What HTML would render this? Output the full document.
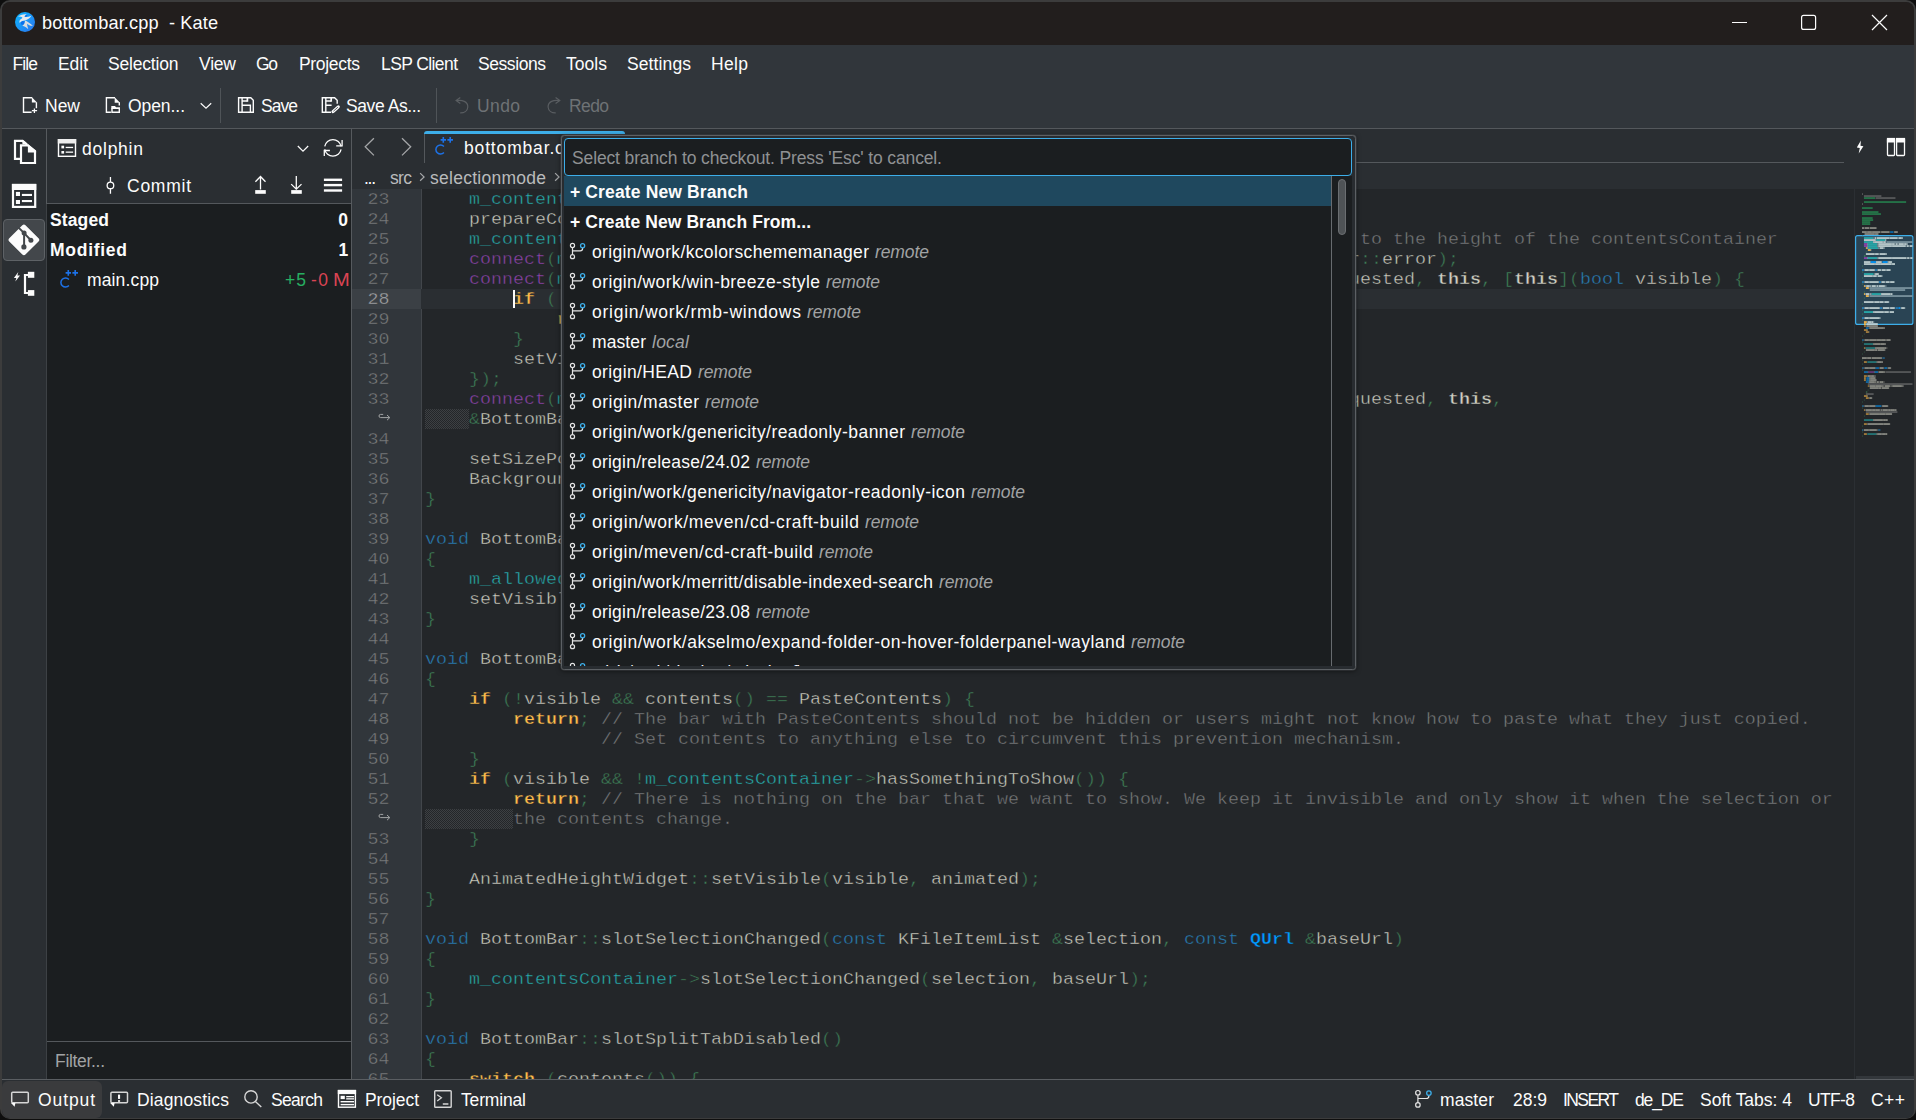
<!DOCTYPE html><html><head><meta charset="utf-8"><title>bottombar.cpp - Kate</title><style>
*{box-sizing:border-box;margin:0;padding:0}
html,body{width:1916px;height:1120px;overflow:hidden;background:#0e0e0e}
body{font-family:"Liberation Sans",sans-serif;position:relative}
.b{position:absolute;display:block}
.t{position:absolute;white-space:pre;display:block}
#win{position:absolute;left:0;top:0;width:1915.5px;height:1119px;border-radius:10px;background:#3c3c3c}
#in{position:absolute;left:2px;top:2px;width:1912px;height:1115.5px;border-radius:8px;overflow:hidden;background:#2a2e32}
#root{position:absolute;left:-2px;top:-2px;width:1916px;height:1120px}
.mono{font-family:"Liberation Mono",monospace}
.ln{position:absolute;left:352px;width:37.5px;text-align:right;font:18.33px/20px "Liberation Mono",monospace;color:#7a7c7d;height:20px;white-space:pre;transform:scaleY(.92);transform-origin:0 14px;margin-top:1px;-webkit-text-stroke:.4px #31363b}
.cl{position:absolute;left:425px;font:18.33px/20px "Liberation Mono",monospace;color:#cfcfc2;height:20px;white-space:pre;transform:scaleY(.92);transform-origin:0 14px;margin-top:1px}
#codein .cl{-webkit-text-stroke:.45px #232629}
.cl .s{color:#3f8058}.cl .v{color:#27aeae}.cl .f{color:#8e44ad}.cl .c{color:#fdbc4b;font-weight:700}
.cl .k{font-weight:700}.cl .d{color:#2980b9}.cl .m{color:#7a7c7d}.cl .q{color:#0099ff;font-weight:700}
#code{position:absolute;left:0;top:189px;width:1916px;height:890px;overflow:hidden}
#codein{position:absolute;left:0;top:-189px;width:1916px;height:1120px}
#pop{position:absolute;left:561px;top:135px;width:795px;height:535px;background:#282c30;border:1px solid #5c6064;border-radius:3.5px;overflow:hidden;box-shadow:0 0 0 .5px rgba(92,96,100,.55),0 1px 5px rgba(0,0,0,.55)}
#popin{position:absolute;left:-562px;top:-136px;width:1916px;height:1120px}
</style></head><body><div id="win"><div id="in"><div id="root"><div class="b" style="left:0px;top:0px;width:1916px;height:45px;background:#221e1d;"></div><span class="t " style="left:42px;top:11.00px;height:24px;line-height:24px;font-size:18.2px;color:#fcfcfc;letter-spacing:0.105px;">bottombar.cpp  - Kate</span><div class="b" style="left:0px;top:45px;width:1916px;height:84px;background:#31363b;"></div><span class="t " style="left:12.5px;top:51.50px;height:24px;line-height:24px;font-size:17.5px;color:#fcfcfc;letter-spacing:-0.901px;">File</span><span class="t " style="left:58px;top:51.50px;height:24px;line-height:24px;font-size:17.5px;color:#fcfcfc;letter-spacing:-0.052px;">Edit</span><span class="t " style="left:108px;top:51.50px;height:24px;line-height:24px;font-size:17.5px;color:#fcfcfc;letter-spacing:-0.188px;">Selection</span><span class="t " style="left:199px;top:51.50px;height:24px;line-height:24px;font-size:17.5px;color:#fcfcfc;letter-spacing:-0.208px;">View</span><span class="t " style="left:256px;top:51.50px;height:24px;line-height:24px;font-size:17.5px;color:#fcfcfc;letter-spacing:-1.359px;">Go</span><span class="t " style="left:299px;top:51.50px;height:24px;line-height:24px;font-size:17.5px;color:#fcfcfc;letter-spacing:-0.317px;">Projects</span><span class="t " style="left:381px;top:51.50px;height:24px;line-height:24px;font-size:17.5px;color:#fcfcfc;letter-spacing:-0.597px;">LSP Client</span><span class="t " style="left:478px;top:51.50px;height:24px;line-height:24px;font-size:17.5px;color:#fcfcfc;letter-spacing:-0.431px;">Sessions</span><span class="t " style="left:566px;top:51.50px;height:24px;line-height:24px;font-size:17.5px;color:#fcfcfc;letter-spacing:0.035px;">Tools</span><span class="t " style="left:627px;top:51.50px;height:24px;line-height:24px;font-size:17.5px;color:#fcfcfc;letter-spacing:0.109px;">Settings</span><span class="t " style="left:711px;top:51.50px;height:24px;line-height:24px;font-size:17.5px;color:#fcfcfc;letter-spacing:0.333px;">Help</span><span class="t " style="left:45px;top:93.50px;height:24px;line-height:24px;font-size:17.5px;color:#fcfcfc;letter-spacing:-0.008px;">New</span><span class="t " style="left:128px;top:93.50px;height:24px;line-height:24px;font-size:17.5px;color:#fcfcfc;letter-spacing:-0.068px;">Open...</span><div class="b" style="left:220px;top:88px;width:1px;height:35px;background:#4f5458;"></div><span class="t " style="left:261px;top:93.50px;height:24px;line-height:24px;font-size:17.5px;color:#fcfcfc;letter-spacing:-0.964px;">Save</span><span class="t " style="left:346px;top:93.50px;height:24px;line-height:24px;font-size:17.5px;color:#fcfcfc;letter-spacing:-0.422px;">Save As...</span><div class="b" style="left:436px;top:88px;width:1px;height:35px;background:#4f5458;"></div><span class="t " style="left:477px;top:93.50px;height:24px;line-height:24px;font-size:17.5px;color:#6e7275;letter-spacing:0.385px;">Undo</span><span class="t " style="left:569px;top:93.50px;height:24px;line-height:24px;font-size:17.5px;color:#6e7275;letter-spacing:-0.615px;">Redo</span><div class="b" style="left:0px;top:128px;width:1916px;height:1px;background:#54585c;"></div><div class="b" style="left:0px;top:129px;width:46px;height:951px;background:#2a2e32;"></div><div class="b" style="left:46px;top:129px;width:1px;height:75px;background:#565a5e;"></div><div class="b" style="left:46px;top:204px;width:1px;height:876px;background:#3d4145;"></div><div class="b" style="left:3px;top:219px;width:42px;height:42px;background:#43474b;border-radius:4px;border:1px solid #5e6266"></div><div class="b" style="left:47px;top:129px;width:304px;height:75px;background:#2a2e32;"></div><span class="t " style="left:82px;top:137.00px;height:24px;line-height:24px;font-size:17.5px;color:#fcfcfc;letter-spacing:0.758px;">dolphin</span><span class="t " style="left:127px;top:174.00px;height:24px;line-height:24px;font-size:17.5px;color:#fcfcfc;letter-spacing:0.744px;">Commit</span><div class="b" style="left:47px;top:203px;width:304px;height:1px;background:#54585c;"></div><div class="b" style="left:47px;top:204px;width:304px;height:837px;background:#1b1e20;"></div><span class="t " style="left:50px;top:208.00px;height:24px;line-height:24px;font-size:17.5px;color:#fcfcfc;font-weight:700;letter-spacing:0.128px;">Staged</span><span class="t " style="left:338.3px;top:208.00px;height:24px;line-height:24px;font-size:17.5px;color:#fcfcfc;font-weight:700;">0</span><span class="t " style="left:50px;top:238.00px;height:24px;line-height:24px;font-size:17.5px;color:#fcfcfc;font-weight:700;letter-spacing:0.723px;">Modified</span><span class="t " style="left:338.4px;top:238.00px;height:24px;line-height:24px;font-size:17.5px;color:#fcfcfc;font-weight:700;">1</span><span class="t " style="left:87px;top:268.20px;height:24px;line-height:24px;font-size:17.5px;color:#fcfcfc;letter-spacing:0.141px;">main.cpp</span><span class="t " style="left:285px;top:268.20px;height:24px;line-height:24px;font-size:17.5px;color:#27ae60;letter-spacing:1.047px;">+5</span><span class="t " style="left:311px;top:268.20px;height:24px;line-height:24px;font-size:17.5px;color:#da4453;letter-spacing:1.438px;">-0</span><span class="t " style="left:333px;top:268.20px;height:24px;line-height:24px;font-size:17.5px;color:#da4453;transform:scaleX(1.15);transform-origin:0 0;">M</span><div class="b" style="left:47px;top:1041px;width:304px;height:1px;background:#54585c;"></div><div class="b" style="left:47px;top:1042px;width:304px;height:37px;background:#1b1e20;"></div><span class="t " style="left:55px;top:1049.00px;height:24px;line-height:24px;font-size:17.5px;color:#a1a3a4;letter-spacing:-0.314px;">Filter...</span><div class="b" style="left:351px;top:129px;width:1px;height:951px;background:#565a5e;"></div><div class="b" style="left:352px;top:129px;width:1564px;height:37px;background:#2a2e32;"></div><div class="b" style="left:626px;top:162px;width:1218px;height:1px;background:#54585c;"></div><div class="b" style="left:424px;top:131px;width:201px;height:3px;background:#3daee9;border-radius:3px 3px 0 0"></div><div class="b" style="left:424px;top:134px;width:1px;height:29px;background:#54585c;"></div><span class="t " style="left:464px;top:136.00px;height:24px;line-height:24px;font-size:17.5px;color:#fcfcfc;letter-spacing:0.841px;">bottombar.cpp</span><div class="b" style="left:352px;top:166px;width:1564px;height:23px;background:#2a2e32;"></div><span class="t " style="left:364px;top:166.00px;height:24px;line-height:24px;font-size:17.5px;color:#fcfcfc;letter-spacing:-1.297px;">...</span><span class="t " style="left:390px;top:166.00px;height:24px;line-height:24px;font-size:17.5px;color:#b9bbbc;letter-spacing:-0.664px;">src</span><span class="t " style="left:430px;top:166.00px;height:24px;line-height:24px;font-size:17.5px;color:#b9bbbc;letter-spacing:0.262px;">selectionmode</span><span class="t " style="left:582px;top:166.00px;height:24px;line-height:24px;font-size:17.5px;color:#b9bbbc;letter-spacing:0.591px;">bottombar.cpp</span><div id="code"><div id="codein"><div class="b" style="left:352px;top:189px;width:69px;height:891px;background:#31363b;"></div><div class="b" style="left:422px;top:189px;width:1433px;height:891px;background:#232629;"></div><div class="b" style="left:421px;top:189px;width:1px;height:891px;background:#42464b;"></div><div class="b" style="left:1855px;top:189px;width:61px;height:891px;background:#232629;"></div><div class="b" style="left:352px;top:289px;width:69px;height:20px;background:#3b4045;"></div><div class="b" style="left:421px;top:289px;width:1434px;height:20px;background:#2a2e32;"></div><div class="ln" style="top:189px;color:#7a7c7d">23</div><div class="cl" style="top:189px">    <span class="v">m_contentsContainer</span> <span class="s">=</span> <span class="k">new</span> <span class="n">BottomBarContentsContainer</span><span class="s">(</span><span class="n">actionCollection</span><span class="s">,</span> <span class="k">nullptr</span><span class="s">);</span></div><div class="ln" style="top:209px;color:#7a7c7d">24</div><div class="cl" style="top:209px">    <span class="n">prepareContentsContainer</span><span class="s">(</span><span class="v">m_contentsContainer</span><span class="s">);</span></div><div class="ln" style="top:229px;color:#7a7c7d">25</div><div class="cl" style="top:229px">    <span class="v">m_contentsContainer</span><span class="s">-&gt;</span><span class="n">installEventFilter</span><span class="s">(</span><span class="k">this</span><span class="s">);</span> <span class="m">// Adjusts the height of this bar to the height of the contentsContainer</span></div><div class="ln" style="top:249px;color:#7a7c7d">26</div><div class="cl" style="top:249px">    <span class="f">connect</span><span class="s">(</span><span class="v">m_contentsContainer</span><span class="s">,</span> <span class="s">&amp;</span><span class="n">BottomBarContentsContainer</span><span class="s">::</span><span class="n">error</span><span class="s">,</span> <span class="k">this</span><span class="s">,</span> <span class="s">&amp;</span><span class="n">BottomBar</span><span class="s">::</span><span class="n">error</span><span class="s">);</span></div><div class="ln" style="top:269px;color:#7a7c7d">27</div><div class="cl" style="top:269px">    <span class="f">connect</span><span class="s">(</span><span class="v">m_contentsContainer</span><span class="s">,</span> <span class="s">&amp;</span><span class="n">BottomBarContentsContainer</span><span class="s">::</span><span class="n">barVisibilityChangeRequested</span><span class="s">,</span> <span class="k">this</span><span class="s">,</span> <span class="s">[</span><span class="k">this</span><span class="s">](</span><span class="d">bool</span> <span class="n">visible</span><span class="s">)</span> <span class="s">{</span></div><div class="ln" style="top:289px;color:#a5a6a8;-webkit-text-stroke-color:#3b4045">28</div><div class="cl" style="top:289px;-webkit-text-stroke-color:#2a2e32">        <span class="c">if</span> <span class="s">(!</span><span class="v">m_allowedToBeVisible</span> <span class="s">&amp;&amp;</span> <span class="n">visible</span><span class="s">)</span> <span class="s">{</span></div><div class="ln" style="top:309px;color:#7a7c7d">29</div><div class="cl" style="top:309px">            <span class="c">return</span><span class="s">;</span></div><div class="ln" style="top:329px;color:#7a7c7d">30</div><div class="cl" style="top:329px">        <span class="s">}</span></div><div class="ln" style="top:349px;color:#7a7c7d">31</div><div class="cl" style="top:349px">        <span class="n">setVisibleInternal</span><span class="s">(</span><span class="n">visible</span><span class="s">,</span> <span class="n">WithAnimation</span><span class="s">);</span></div><div class="ln" style="top:369px;color:#7a7c7d">32</div><div class="cl" style="top:369px">    <span class="s">});</span></div><div class="ln" style="top:389px;color:#7a7c7d">33</div><div class="cl" style="top:389px">    <span class="f">connect</span><span class="s">(</span><span class="v">m_contentsContainer</span><span class="s">,</span> <span class="s">&amp;</span><span class="n">BottomBarContentsContainer</span><span class="s">::</span><span class="n">selectionModeLeavingRequested</span><span class="s">,</span> <span class="k">this</span><span class="s">,</span></div><svg class="b" style="left:376px;top:409px;" width="16" height="20" viewBox="0 0 16 20"><path d="M7.2 5.4H4.6A1.6 1.6 0 0 0 4.6 8.6H13.4M11 6L13.8 8.6L11 11.2" fill="none" stroke="#a3a5a6" stroke-width="1"/></svg><div class="b" style="left:425px;top:409px;width:44px;height:20px;background:#232629;background-image:repeating-conic-gradient(#3d4043 0% 25%,#232629 0% 50%);background-size:2px 2px"></div><div class="cl" style="top:409px">    <span class="s">&amp;</span><span class="n">BottomBar</span><span class="s">::</span><span class="n">selectionModeLeavingRequested</span><span class="s">);</span></div><div class="ln" style="top:429px;color:#7a7c7d">34</div><div class="ln" style="top:449px;color:#7a7c7d">35</div><div class="cl" style="top:449px">    <span class="n">setSizePolicy</span><span class="s">(</span><span class="q">QSizePolicy</span><span class="s">::</span><span class="n">Expanding</span><span class="s">,</span> <span class="q">QSizePolicy</span><span class="s">::</span><span class="n">Fixed</span><span class="s">);</span></div><div class="ln" style="top:469px;color:#7a7c7d">36</div><div class="cl" style="top:469px">    <span class="n">BackgroundColorHelper</span><span class="s">::</span><span class="n">instance</span><span class="s">()-&gt;</span><span class="n">controlBackgroundColor</span><span class="s">(</span><span class="k">this</span><span class="s">);</span></div><div class="ln" style="top:489px;color:#7a7c7d">37</div><div class="cl" style="top:489px"><span class="s">}</span></div><div class="ln" style="top:509px;color:#7a7c7d">38</div><div class="ln" style="top:529px;color:#7a7c7d">39</div><div class="cl" style="top:529px"><span class="d">void</span> <span class="n">BottomBar</span><span class="s">::</span><span class="n">setVisible</span><span class="s">(</span><span class="d">bool</span> <span class="n">visible</span><span class="s">,</span> <span class="n">Animated animated</span><span class="s">)</span></div><div class="ln" style="top:549px;color:#7a7c7d">40</div><div class="cl" style="top:549px"><span class="s">{</span></div><div class="ln" style="top:569px;color:#7a7c7d">41</div><div class="cl" style="top:569px">    <span class="v">m_allowedToBeVisible</span> <span class="s">=</span> <span class="n">visible</span><span class="s">;</span></div><div class="ln" style="top:589px;color:#7a7c7d">42</div><div class="cl" style="top:589px">    <span class="n">setVisibleInternal</span><span class="s">(</span><span class="n">visible</span><span class="s">,</span> <span class="n">animated</span><span class="s">);</span></div><div class="ln" style="top:609px;color:#7a7c7d">43</div><div class="cl" style="top:609px"><span class="s">}</span></div><div class="ln" style="top:629px;color:#7a7c7d">44</div><div class="ln" style="top:649px;color:#7a7c7d">45</div><div class="cl" style="top:649px"><span class="d">void</span> <span class="n">BottomBar</span><span class="s">::</span><span class="n">setVisibleInternal</span><span class="s">(</span><span class="d">bool</span> <span class="n">visible</span><span class="s">,</span> <span class="n">Animated animated</span><span class="s">)</span></div><div class="ln" style="top:669px;color:#7a7c7d">46</div><div class="cl" style="top:669px"><span class="s">{</span></div><div class="ln" style="top:689px;color:#7a7c7d">47</div><div class="cl" style="top:689px">    <span class="c">if</span> <span class="s">(!</span><span class="n">visible</span> <span class="s">&amp;&amp;</span> <span class="n">contents</span><span class="s">()</span> <span class="s">==</span> <span class="n">PasteContents</span><span class="s">)</span> <span class="s">{</span></div><div class="ln" style="top:709px;color:#7a7c7d">48</div><div class="cl" style="top:709px">        <span class="c">return</span><span class="s">;</span> <span class="m">// The bar with PasteContents should not be hidden or users might not know how to paste what they just copied.</span></div><div class="ln" style="top:729px;color:#7a7c7d">49</div><div class="cl" style="top:729px">                <span class="m">// Set contents to anything else to circumvent this prevention mechanism.</span></div><div class="ln" style="top:749px;color:#7a7c7d">50</div><div class="cl" style="top:749px">    <span class="s">}</span></div><div class="ln" style="top:769px;color:#7a7c7d">51</div><div class="cl" style="top:769px">    <span class="c">if</span> <span class="s">(</span><span class="n">visible</span> <span class="s">&amp;&amp;</span> <span class="s">!</span><span class="v">m_contentsContainer</span><span class="s">-&gt;</span><span class="n">hasSomethingToShow</span><span class="s">())</span> <span class="s">{</span></div><div class="ln" style="top:789px;color:#7a7c7d">52</div><div class="cl" style="top:789px">        <span class="c">return</span><span class="s">;</span> <span class="m">// There is nothing on the bar that we want to show. We keep it invisible and only show it when the selection or</span></div><svg class="b" style="left:376px;top:809px;" width="16" height="20" viewBox="0 0 16 20"><path d="M7.2 5.4H4.6A1.6 1.6 0 0 0 4.6 8.6H13.4M11 6L13.8 8.6L11 11.2" fill="none" stroke="#a3a5a6" stroke-width="1"/></svg><div class="b" style="left:425px;top:809px;width:88px;height:20px;background:#232629;background-image:repeating-conic-gradient(#3d4043 0% 25%,#232629 0% 50%);background-size:2px 2px"></div><div class="cl" style="top:809px">        <span class="m">the contents change.</span></div><div class="ln" style="top:829px;color:#7a7c7d">53</div><div class="cl" style="top:829px">    <span class="s">}</span></div><div class="ln" style="top:849px;color:#7a7c7d">54</div><div class="ln" style="top:869px;color:#7a7c7d">55</div><div class="cl" style="top:869px">    <span class="n">AnimatedHeightWidget</span><span class="s">::</span><span class="n">setVisible</span><span class="s">(</span><span class="n">visible</span><span class="s">,</span> <span class="n">animated</span><span class="s">);</span></div><div class="ln" style="top:889px;color:#7a7c7d">56</div><div class="cl" style="top:889px"><span class="s">}</span></div><div class="ln" style="top:909px;color:#7a7c7d">57</div><div class="ln" style="top:929px;color:#7a7c7d">58</div><div class="cl" style="top:929px"><span class="d">void</span> <span class="n">BottomBar</span><span class="s">::</span><span class="n">slotSelectionChanged</span><span class="s">(</span><span class="d">const</span> <span class="n">KFileItemList</span> <span class="s">&amp;</span><span class="n">selection</span><span class="s">,</span> <span class="d">const</span> <span class="q">QUrl</span> <span class="s">&amp;</span><span class="n">baseUrl</span><span class="s">)</span></div><div class="ln" style="top:949px;color:#7a7c7d">59</div><div class="cl" style="top:949px"><span class="s">{</span></div><div class="ln" style="top:969px;color:#7a7c7d">60</div><div class="cl" style="top:969px">    <span class="v">m_contentsContainer</span><span class="s">-&gt;</span><span class="n">slotSelectionChanged</span><span class="s">(</span><span class="n">selection</span><span class="s">,</span> <span class="n">baseUrl</span><span class="s">);</span></div><div class="ln" style="top:989px;color:#7a7c7d">61</div><div class="cl" style="top:989px"><span class="s">}</span></div><div class="ln" style="top:1009px;color:#7a7c7d">62</div><div class="ln" style="top:1029px;color:#7a7c7d">63</div><div class="cl" style="top:1029px"><span class="d">void</span> <span class="n">BottomBar</span><span class="s">::</span><span class="n">slotSplitTabDisabled</span><span class="s">()</span></div><div class="ln" style="top:1049px;color:#7a7c7d">64</div><div class="cl" style="top:1049px"><span class="s">{</span></div><div class="ln" style="top:1069px;color:#7a7c7d">65</div><div class="cl" style="top:1069px">    <span class="c">switch</span> <span class="s">(</span><span class="n">contents</span><span class="s">())</span> <span class="s">{</span></div><svg class="b" style="left:1855px;top:189px" width="59" height="300" viewBox="1855 189 59 300"><rect x="1855.6" y="235.6" width="57.3" height="88.8" rx="2" fill="#2a4454" stroke="#3daee9" stroke-width="1.2"/><rect x="1862.00" y="193.2" width="0.97" height="1.7" fill="#7a7c7d" opacity="0.62"/><rect x="1863.94" y="195.2" width="17.46" height="1.7" fill="#7a7c7d" opacity="0.62"/><rect x="1863.94" y="197.2" width="11.15" height="1.7" fill="#27ae60" opacity="0.62"/><rect x="1875.58" y="197.2" width="19.88" height="1.7" fill="#7a7c7d" opacity="0.62"/><rect x="1863.94" y="201.2" width="42.20" height="1.7" fill="#27ae60" opacity="0.62"/><rect x="1862.00" y="203.2" width="0.97" height="1.7" fill="#7a7c7d" opacity="0.62"/><rect x="1862.00" y="207.2" width="10.67" height="1.7" fill="#27ae60" opacity="0.62"/><rect x="1862.00" y="211.2" width="16.49" height="1.7" fill="#27ae60" opacity="0.62"/><rect x="1862.00" y="213.2" width="18.91" height="1.7" fill="#27ae60" opacity="0.62"/><rect x="1862.00" y="217.2" width="10.67" height="1.7" fill="#27ae60" opacity="0.62"/><rect x="1862.00" y="219.2" width="11.15" height="1.7" fill="#27ae60" opacity="0.62"/><rect x="1862.00" y="221.2" width="8.24" height="1.7" fill="#27ae60" opacity="0.62"/><rect x="1862.00" y="223.2" width="8.24" height="1.7" fill="#27ae60" opacity="0.62"/><rect x="1862.00" y="227.2" width="2.42" height="1.7" fill="#cfcfc2" opacity="0.62"/><rect x="1864.91" y="227.2" width="4.37" height="1.7" fill="#cfcfc2" opacity="0.62"/><rect x="1869.76" y="227.2" width="6.30" height="1.7" fill="#cfcfc2" opacity="0.62"/><rect x="1876.07" y="227.2" width="0.48" height="1.7" fill="#cfcfc2" opacity="0.62"/><rect x="1862.00" y="231.2" width="4.37" height="1.7" fill="#cfcfc2" opacity="0.62"/><rect x="1866.37" y="231.2" width="0.97" height="1.7" fill="#cfcfc2" opacity="0.62"/><rect x="1867.34" y="231.2" width="4.37" height="1.7" fill="#cfcfc2" opacity="0.62"/><rect x="1871.70" y="231.2" width="0.48" height="1.7" fill="#cfcfc2" opacity="0.62"/><rect x="1872.18" y="231.2" width="8.24" height="1.7" fill="#cfcfc2" opacity="0.62"/><rect x="1880.91" y="231.2" width="0.48" height="1.7" fill="#cfcfc2" opacity="0.62"/><rect x="1881.40" y="231.2" width="7.76" height="1.7" fill="#cfcfc2" opacity="0.62"/><rect x="1889.16" y="231.2" width="0.48" height="1.7" fill="#cfcfc2" opacity="0.62"/><rect x="1890.13" y="231.2" width="3.40" height="1.7" fill="#0099ff" opacity="0.62"/><rect x="1894.01" y="231.2" width="0.48" height="1.7" fill="#cfcfc2" opacity="0.62"/><rect x="1894.49" y="231.2" width="2.91" height="1.7" fill="#cfcfc2" opacity="0.62"/><rect x="1897.40" y="231.2" width="0.48" height="1.7" fill="#cfcfc2" opacity="0.62"/><rect x="1863.94" y="233.2" width="0.48" height="1.7" fill="#cfcfc2" opacity="0.62"/><rect x="1864.91" y="233.2" width="9.70" height="1.7" fill="#cfcfc2" opacity="0.62"/><rect x="1874.61" y="233.2" width="0.48" height="1.7" fill="#cfcfc2" opacity="0.62"/><rect x="1875.10" y="233.2" width="2.91" height="1.7" fill="#cfcfc2" opacity="0.62"/><rect x="1878.01" y="233.2" width="0.48" height="1.7" fill="#cfcfc2" opacity="0.62"/><rect x="1862.00" y="235.2" width="0.48" height="1.7" fill="#3f8058"/><rect x="1863.94" y="237.2" width="9.21" height="1.7" fill="#27aeae"/><rect x="1873.64" y="237.2" width="0.48" height="1.7" fill="#c3d3d4"/><rect x="1874.61" y="237.2" width="1.46" height="1.7" fill="#c3d3d4"/><rect x="1876.55" y="237.2" width="12.61" height="1.7" fill="#c3d3d4"/><rect x="1889.16" y="237.2" width="0.48" height="1.7" fill="#c3d3d4"/><rect x="1889.64" y="237.2" width="7.76" height="1.7" fill="#c3d3d4"/><rect x="1897.40" y="237.2" width="0.48" height="1.7" fill="#c3d3d4"/><rect x="1898.38" y="237.2" width="3.40" height="1.7" fill="#c3d3d4"/><rect x="1901.77" y="237.2" width="0.97" height="1.7" fill="#c3d3d4"/><rect x="1863.94" y="239.2" width="11.64" height="1.7" fill="#c3d3d4"/><rect x="1875.58" y="239.2" width="0.48" height="1.7" fill="#c3d3d4"/><rect x="1876.07" y="239.2" width="9.21" height="1.7" fill="#27aeae"/><rect x="1885.28" y="239.2" width="0.97" height="1.7" fill="#c3d3d4"/><rect x="1863.94" y="241.2" width="9.21" height="1.7" fill="#27aeae"/><rect x="1873.15" y="241.2" width="0.97" height="1.7" fill="#c3d3d4"/><rect x="1874.12" y="241.2" width="8.73" height="1.7" fill="#c3d3d4"/><rect x="1882.86" y="241.2" width="0.48" height="1.7" fill="#c3d3d4"/><rect x="1883.34" y="241.2" width="1.94" height="1.7" fill="#c3d3d4"/><rect x="1885.28" y="241.2" width="0.97" height="1.7" fill="#c3d3d4"/><rect x="1886.73" y="241.2" width="25.77" height="1.7" fill="#7d96a1"/><rect x="1863.94" y="243.2" width="3.40" height="1.7" fill="#8e44ad"/><rect x="1867.34" y="243.2" width="0.48" height="1.7" fill="#c3d3d4"/><rect x="1867.82" y="243.2" width="9.21" height="1.7" fill="#27aeae"/><rect x="1877.04" y="243.2" width="0.48" height="1.7" fill="#c3d3d4"/><rect x="1878.01" y="243.2" width="0.48" height="1.7" fill="#c3d3d4"/><rect x="1878.49" y="243.2" width="12.61" height="1.7" fill="#c3d3d4"/><rect x="1891.10" y="243.2" width="0.97" height="1.7" fill="#c3d3d4"/><rect x="1892.07" y="243.2" width="2.42" height="1.7" fill="#c3d3d4"/><rect x="1894.49" y="243.2" width="0.48" height="1.7" fill="#c3d3d4"/><rect x="1895.46" y="243.2" width="1.94" height="1.7" fill="#c3d3d4"/><rect x="1897.40" y="243.2" width="0.48" height="1.7" fill="#c3d3d4"/><rect x="1898.38" y="243.2" width="0.48" height="1.7" fill="#c3d3d4"/><rect x="1898.86" y="243.2" width="4.37" height="1.7" fill="#c3d3d4"/><rect x="1903.22" y="243.2" width="0.97" height="1.7" fill="#c3d3d4"/><rect x="1904.19" y="243.2" width="2.42" height="1.7" fill="#c3d3d4"/><rect x="1906.62" y="243.2" width="0.97" height="1.7" fill="#c3d3d4"/><rect x="1863.94" y="245.2" width="3.40" height="1.7" fill="#8e44ad"/><rect x="1867.34" y="245.2" width="0.48" height="1.7" fill="#c3d3d4"/><rect x="1867.82" y="245.2" width="9.21" height="1.7" fill="#27aeae"/><rect x="1877.04" y="245.2" width="0.48" height="1.7" fill="#c3d3d4"/><rect x="1878.01" y="245.2" width="0.48" height="1.7" fill="#c3d3d4"/><rect x="1878.49" y="245.2" width="12.61" height="1.7" fill="#c3d3d4"/><rect x="1891.10" y="245.2" width="0.97" height="1.7" fill="#c3d3d4"/><rect x="1892.07" y="245.2" width="13.58" height="1.7" fill="#c3d3d4"/><rect x="1905.65" y="245.2" width="0.48" height="1.7" fill="#c3d3d4"/><rect x="1906.62" y="245.2" width="1.94" height="1.7" fill="#c3d3d4"/><rect x="1908.56" y="245.2" width="0.48" height="1.7" fill="#c3d3d4"/><rect x="1909.53" y="245.2" width="0.48" height="1.7" fill="#c3d3d4"/><rect x="1910.02" y="245.2" width="1.94" height="1.7" fill="#c3d3d4"/><rect x="1911.95" y="245.2" width="0.55" height="1.7" fill="#c3d3d4"/><rect x="1865.88" y="247.2" width="0.97" height="1.7" fill="#fdbc4b"/><rect x="1867.34" y="247.2" width="0.97" height="1.7" fill="#c3d3d4"/><rect x="1868.31" y="247.2" width="9.70" height="1.7" fill="#27aeae"/><rect x="1878.49" y="247.2" width="0.97" height="1.7" fill="#c3d3d4"/><rect x="1879.94" y="247.2" width="3.40" height="1.7" fill="#c3d3d4"/><rect x="1883.34" y="247.2" width="0.48" height="1.7" fill="#c3d3d4"/><rect x="1884.31" y="247.2" width="0.48" height="1.7" fill="#c3d3d4"/><rect x="1867.82" y="249.2" width="2.91" height="1.7" fill="#fdbc4b"/><rect x="1870.73" y="249.2" width="0.48" height="1.7" fill="#c3d3d4"/><rect x="1865.88" y="251.2" width="0.48" height="1.7" fill="#3f8058"/><rect x="1865.88" y="253.2" width="8.73" height="1.7" fill="#c3d3d4"/><rect x="1874.61" y="253.2" width="0.48" height="1.7" fill="#c3d3d4"/><rect x="1875.10" y="253.2" width="3.40" height="1.7" fill="#c3d3d4"/><rect x="1878.49" y="253.2" width="0.48" height="1.7" fill="#c3d3d4"/><rect x="1879.46" y="253.2" width="6.30" height="1.7" fill="#c3d3d4"/><rect x="1885.77" y="253.2" width="0.97" height="1.7" fill="#c3d3d4"/><rect x="1863.94" y="255.2" width="1.46" height="1.7" fill="#3f8058"/><rect x="1863.94" y="257.2" width="3.40" height="1.7" fill="#8e44ad"/><rect x="1867.34" y="257.2" width="0.48" height="1.7" fill="#c3d3d4"/><rect x="1867.82" y="257.2" width="9.21" height="1.7" fill="#27aeae"/><rect x="1877.04" y="257.2" width="0.48" height="1.7" fill="#c3d3d4"/><rect x="1878.01" y="257.2" width="0.48" height="1.7" fill="#c3d3d4"/><rect x="1878.49" y="257.2" width="12.61" height="1.7" fill="#c3d3d4"/><rect x="1891.10" y="257.2" width="0.97" height="1.7" fill="#c3d3d4"/><rect x="1892.07" y="257.2" width="14.06" height="1.7" fill="#c3d3d4"/><rect x="1906.13" y="257.2" width="0.48" height="1.7" fill="#c3d3d4"/><rect x="1907.11" y="257.2" width="1.94" height="1.7" fill="#c3d3d4"/><rect x="1909.05" y="257.2" width="0.48" height="1.7" fill="#c3d3d4"/><rect x="1910.02" y="257.2" width="0.48" height="1.7" fill="#c3d3d4"/><rect x="1910.50" y="257.2" width="2.00" height="1.7" fill="#c3d3d4"/><rect x="1863.94" y="261.2" width="6.30" height="1.7" fill="#c3d3d4"/><rect x="1870.24" y="261.2" width="0.48" height="1.7" fill="#c3d3d4"/><rect x="1870.73" y="261.2" width="5.33" height="1.7" fill="#0099ff"/><rect x="1876.07" y="261.2" width="0.97" height="1.7" fill="#c3d3d4"/><rect x="1877.04" y="261.2" width="4.37" height="1.7" fill="#c3d3d4"/><rect x="1881.40" y="261.2" width="0.48" height="1.7" fill="#c3d3d4"/><rect x="1882.37" y="261.2" width="5.33" height="1.7" fill="#0099ff"/><rect x="1887.70" y="261.2" width="0.97" height="1.7" fill="#c3d3d4"/><rect x="1888.67" y="261.2" width="2.42" height="1.7" fill="#c3d3d4"/><rect x="1891.10" y="261.2" width="0.97" height="1.7" fill="#c3d3d4"/><rect x="1863.94" y="263.2" width="10.19" height="1.7" fill="#c3d3d4"/><rect x="1874.12" y="263.2" width="0.97" height="1.7" fill="#c3d3d4"/><rect x="1875.10" y="263.2" width="3.88" height="1.7" fill="#c3d3d4"/><rect x="1878.97" y="263.2" width="1.94" height="1.7" fill="#c3d3d4"/><rect x="1880.91" y="263.2" width="10.67" height="1.7" fill="#c3d3d4"/><rect x="1891.59" y="263.2" width="0.48" height="1.7" fill="#c3d3d4"/><rect x="1892.07" y="263.2" width="1.94" height="1.7" fill="#c3d3d4"/><rect x="1894.01" y="263.2" width="0.97" height="1.7" fill="#c3d3d4"/><rect x="1862.00" y="265.2" width="0.48" height="1.7" fill="#3f8058"/><rect x="1862.00" y="269.2" width="1.94" height="1.7" fill="#2980b9"/><rect x="1864.42" y="269.2" width="4.37" height="1.7" fill="#c3d3d4"/><rect x="1868.79" y="269.2" width="0.97" height="1.7" fill="#c3d3d4"/><rect x="1869.76" y="269.2" width="4.85" height="1.7" fill="#c3d3d4"/><rect x="1874.61" y="269.2" width="0.48" height="1.7" fill="#c3d3d4"/><rect x="1875.10" y="269.2" width="1.94" height="1.7" fill="#2980b9"/><rect x="1877.52" y="269.2" width="3.40" height="1.7" fill="#c3d3d4"/><rect x="1880.91" y="269.2" width="0.48" height="1.7" fill="#c3d3d4"/><rect x="1881.88" y="269.2" width="3.88" height="1.7" fill="#c3d3d4"/><rect x="1886.25" y="269.2" width="3.88" height="1.7" fill="#c3d3d4"/><rect x="1890.13" y="269.2" width="0.48" height="1.7" fill="#c3d3d4"/><rect x="1862.00" y="271.2" width="0.48" height="1.7" fill="#3f8058"/><rect x="1863.94" y="273.2" width="9.70" height="1.7" fill="#27aeae"/><rect x="1874.12" y="273.2" width="0.48" height="1.7" fill="#c3d3d4"/><rect x="1875.10" y="273.2" width="3.40" height="1.7" fill="#c3d3d4"/><rect x="1878.49" y="273.2" width="0.48" height="1.7" fill="#c3d3d4"/><rect x="1863.94" y="275.2" width="8.73" height="1.7" fill="#c3d3d4"/><rect x="1872.67" y="275.2" width="0.48" height="1.7" fill="#c3d3d4"/><rect x="1873.15" y="275.2" width="3.40" height="1.7" fill="#c3d3d4"/><rect x="1876.55" y="275.2" width="0.48" height="1.7" fill="#c3d3d4"/><rect x="1877.52" y="275.2" width="3.88" height="1.7" fill="#c3d3d4"/><rect x="1881.40" y="275.2" width="0.97" height="1.7" fill="#c3d3d4"/><rect x="1862.00" y="277.2" width="0.48" height="1.7" fill="#3f8058"/><rect x="1862.00" y="281.2" width="1.94" height="1.7" fill="#2980b9"/><rect x="1864.42" y="281.2" width="4.37" height="1.7" fill="#c3d3d4"/><rect x="1868.79" y="281.2" width="0.97" height="1.7" fill="#c3d3d4"/><rect x="1869.76" y="281.2" width="8.73" height="1.7" fill="#c3d3d4"/><rect x="1878.49" y="281.2" width="0.48" height="1.7" fill="#c3d3d4"/><rect x="1878.97" y="281.2" width="1.94" height="1.7" fill="#2980b9"/><rect x="1881.40" y="281.2" width="3.40" height="1.7" fill="#c3d3d4"/><rect x="1884.80" y="281.2" width="0.48" height="1.7" fill="#c3d3d4"/><rect x="1885.77" y="281.2" width="3.88" height="1.7" fill="#c3d3d4"/><rect x="1890.13" y="281.2" width="3.88" height="1.7" fill="#c3d3d4"/><rect x="1894.01" y="281.2" width="0.48" height="1.7" fill="#c3d3d4"/><rect x="1862.00" y="283.2" width="0.48" height="1.7" fill="#3f8058"/><rect x="1863.94" y="285.2" width="0.97" height="1.7" fill="#fdbc4b"/><rect x="1865.39" y="285.2" width="0.97" height="1.7" fill="#c3d3d4"/><rect x="1866.37" y="285.2" width="3.40" height="1.7" fill="#c3d3d4"/><rect x="1870.24" y="285.2" width="0.97" height="1.7" fill="#c3d3d4"/><rect x="1871.70" y="285.2" width="3.88" height="1.7" fill="#c3d3d4"/><rect x="1875.58" y="285.2" width="0.97" height="1.7" fill="#c3d3d4"/><rect x="1877.04" y="285.2" width="0.97" height="1.7" fill="#c3d3d4"/><rect x="1878.49" y="285.2" width="6.30" height="1.7" fill="#c3d3d4"/><rect x="1884.80" y="285.2" width="0.48" height="1.7" fill="#c3d3d4"/><rect x="1885.77" y="285.2" width="0.48" height="1.7" fill="#c3d3d4"/><rect x="1865.88" y="287.2" width="2.91" height="1.7" fill="#fdbc4b"/><rect x="1868.79" y="287.2" width="0.48" height="1.7" fill="#c3d3d4"/><rect x="1869.76" y="287.2" width="42.74" height="1.7" fill="#7d96a1"/><rect x="1869.76" y="289.2" width="35.41" height="1.7" fill="#7d96a1"/><rect x="1863.94" y="291.2" width="0.48" height="1.7" fill="#3f8058"/><rect x="1863.94" y="293.2" width="0.97" height="1.7" fill="#fdbc4b"/><rect x="1865.39" y="293.2" width="0.48" height="1.7" fill="#c3d3d4"/><rect x="1865.88" y="293.2" width="3.40" height="1.7" fill="#c3d3d4"/><rect x="1869.76" y="293.2" width="0.97" height="1.7" fill="#c3d3d4"/><rect x="1871.21" y="293.2" width="0.48" height="1.7" fill="#c3d3d4"/><rect x="1871.70" y="293.2" width="9.21" height="1.7" fill="#27aeae"/><rect x="1880.91" y="293.2" width="0.97" height="1.7" fill="#c3d3d4"/><rect x="1881.88" y="293.2" width="8.73" height="1.7" fill="#c3d3d4"/><rect x="1890.62" y="293.2" width="1.46" height="1.7" fill="#c3d3d4"/><rect x="1892.56" y="293.2" width="0.48" height="1.7" fill="#c3d3d4"/><rect x="1865.88" y="295.2" width="2.91" height="1.7" fill="#fdbc4b"/><rect x="1868.79" y="295.2" width="0.48" height="1.7" fill="#c3d3d4"/><rect x="1869.76" y="295.2" width="42.74" height="1.7" fill="#7d96a1"/><rect x="1863.94" y="297.2" width="0.48" height="1.7" fill="#3f8058"/><rect x="1863.94" y="301.2" width="9.70" height="1.7" fill="#c3d3d4"/><rect x="1873.64" y="301.2" width="0.97" height="1.7" fill="#c3d3d4"/><rect x="1874.61" y="301.2" width="4.85" height="1.7" fill="#c3d3d4"/><rect x="1879.46" y="301.2" width="0.48" height="1.7" fill="#c3d3d4"/><rect x="1879.94" y="301.2" width="3.40" height="1.7" fill="#c3d3d4"/><rect x="1883.34" y="301.2" width="0.48" height="1.7" fill="#c3d3d4"/><rect x="1884.31" y="301.2" width="3.88" height="1.7" fill="#c3d3d4"/><rect x="1888.19" y="301.2" width="0.97" height="1.7" fill="#c3d3d4"/><rect x="1862.00" y="303.2" width="0.48" height="1.7" fill="#3f8058"/><rect x="1862.00" y="307.2" width="1.94" height="1.7" fill="#2980b9"/><rect x="1864.42" y="307.2" width="4.37" height="1.7" fill="#c3d3d4"/><rect x="1868.79" y="307.2" width="0.97" height="1.7" fill="#c3d3d4"/><rect x="1869.76" y="307.2" width="9.70" height="1.7" fill="#c3d3d4"/><rect x="1879.46" y="307.2" width="0.48" height="1.7" fill="#c3d3d4"/><rect x="1879.94" y="307.2" width="2.42" height="1.7" fill="#2980b9"/><rect x="1882.86" y="307.2" width="6.30" height="1.7" fill="#c3d3d4"/><rect x="1889.64" y="307.2" width="0.48" height="1.7" fill="#c3d3d4"/><rect x="1890.13" y="307.2" width="4.37" height="1.7" fill="#c3d3d4"/><rect x="1894.49" y="307.2" width="0.48" height="1.7" fill="#c3d3d4"/><rect x="1895.46" y="307.2" width="2.42" height="1.7" fill="#2980b9"/><rect x="1898.38" y="307.2" width="1.94" height="1.7" fill="#0099ff"/><rect x="1900.80" y="307.2" width="0.48" height="1.7" fill="#c3d3d4"/><rect x="1901.29" y="307.2" width="3.40" height="1.7" fill="#c3d3d4"/><rect x="1904.68" y="307.2" width="0.48" height="1.7" fill="#c3d3d4"/><rect x="1862.00" y="309.2" width="0.48" height="1.7" fill="#3f8058"/><rect x="1863.94" y="311.2" width="9.21" height="1.7" fill="#27aeae"/><rect x="1873.15" y="311.2" width="0.97" height="1.7" fill="#c3d3d4"/><rect x="1874.12" y="311.2" width="9.70" height="1.7" fill="#c3d3d4"/><rect x="1883.83" y="311.2" width="0.48" height="1.7" fill="#c3d3d4"/><rect x="1884.31" y="311.2" width="4.37" height="1.7" fill="#c3d3d4"/><rect x="1888.67" y="311.2" width="0.48" height="1.7" fill="#c3d3d4"/><rect x="1889.64" y="311.2" width="3.40" height="1.7" fill="#c3d3d4"/><rect x="1893.04" y="311.2" width="0.97" height="1.7" fill="#c3d3d4"/><rect x="1862.00" y="313.2" width="0.48" height="1.7" fill="#3f8058"/><rect x="1862.00" y="317.2" width="1.94" height="1.7" fill="#2980b9"/><rect x="1864.42" y="317.2" width="4.37" height="1.7" fill="#c3d3d4"/><rect x="1868.79" y="317.2" width="0.97" height="1.7" fill="#c3d3d4"/><rect x="1869.76" y="317.2" width="9.70" height="1.7" fill="#c3d3d4"/><rect x="1879.46" y="317.2" width="0.97" height="1.7" fill="#c3d3d4"/><rect x="1862.00" y="319.2" width="0.48" height="1.7" fill="#3f8058"/><rect x="1863.94" y="321.2" width="2.91" height="1.7" fill="#fdbc4b"/><rect x="1867.34" y="321.2" width="0.48" height="1.7" fill="#c3d3d4"/><rect x="1867.82" y="321.2" width="3.88" height="1.7" fill="#c3d3d4"/><rect x="1871.70" y="321.2" width="1.46" height="1.7" fill="#c3d3d4"/><rect x="1873.64" y="321.2" width="0.48" height="1.7" fill="#c3d3d4"/><rect x="1863.94" y="323.2" width="1.94" height="1.7" fill="#fdbc4b"/><rect x="1866.37" y="323.2" width="11.15" height="1.7" fill="#c3d3d4"/><rect x="1877.52" y="323.2" width="0.48" height="1.7" fill="#c3d3d4"/><rect x="1863.94" y="325.2" width="1.94" height="1.7" fill="#fdbc4b" opacity="0.62"/><rect x="1866.37" y="325.2" width="11.15" height="1.7" fill="#cfcfc2" opacity="0.62"/><rect x="1877.52" y="325.2" width="0.48" height="1.7" fill="#cfcfc2" opacity="0.62"/><rect x="1865.88" y="327.2" width="2.91" height="1.7" fill="#0099ff" opacity="0.62"/><rect x="1869.28" y="327.2" width="14.06" height="1.7" fill="#cfcfc2" opacity="0.62"/><rect x="1883.34" y="327.2" width="1.46" height="1.7" fill="#cfcfc2" opacity="0.62"/><rect x="1863.94" y="329.2" width="3.40" height="1.7" fill="#fdbc4b" opacity="0.62"/><rect x="1867.34" y="329.2" width="0.48" height="1.7" fill="#cfcfc2" opacity="0.62"/><rect x="1865.88" y="331.2" width="2.91" height="1.7" fill="#fdbc4b" opacity="0.62"/><rect x="1868.79" y="331.2" width="0.48" height="1.7" fill="#cfcfc2" opacity="0.62"/><rect x="1863.94" y="333.2" width="0.48" height="1.7" fill="#3f8058" opacity="0.62"/><rect x="1862.00" y="335.2" width="0.48" height="1.7" fill="#3f8058" opacity="0.62"/><rect x="1862.00" y="339.2" width="1.94" height="1.7" fill="#2980b9" opacity="0.62"/><rect x="1864.42" y="339.2" width="4.37" height="1.7" fill="#cfcfc2" opacity="0.62"/><rect x="1868.79" y="339.2" width="0.97" height="1.7" fill="#cfcfc2" opacity="0.62"/><rect x="1869.76" y="339.2" width="6.30" height="1.7" fill="#cfcfc2" opacity="0.62"/><rect x="1876.07" y="339.2" width="0.48" height="1.7" fill="#cfcfc2" opacity="0.62"/><rect x="1876.55" y="339.2" width="4.37" height="1.7" fill="#cfcfc2" opacity="0.62"/><rect x="1880.91" y="339.2" width="0.97" height="1.7" fill="#cfcfc2" opacity="0.62"/><rect x="1881.88" y="339.2" width="3.88" height="1.7" fill="#cfcfc2" opacity="0.62"/><rect x="1886.25" y="339.2" width="3.88" height="1.7" fill="#cfcfc2" opacity="0.62"/><rect x="1890.13" y="339.2" width="0.48" height="1.7" fill="#cfcfc2" opacity="0.62"/><rect x="1862.00" y="341.2" width="0.48" height="1.7" fill="#3f8058" opacity="0.62"/><rect x="1863.94" y="343.2" width="9.21" height="1.7" fill="#27aeae" opacity="0.62"/><rect x="1873.15" y="343.2" width="0.97" height="1.7" fill="#cfcfc2" opacity="0.62"/><rect x="1874.12" y="343.2" width="6.30" height="1.7" fill="#cfcfc2" opacity="0.62"/><rect x="1880.43" y="343.2" width="0.48" height="1.7" fill="#cfcfc2" opacity="0.62"/><rect x="1880.91" y="343.2" width="3.88" height="1.7" fill="#cfcfc2" opacity="0.62"/><rect x="1884.80" y="343.2" width="0.97" height="1.7" fill="#cfcfc2" opacity="0.62"/><rect x="1863.94" y="347.2" width="0.97" height="1.7" fill="#fdbc4b" opacity="0.62"/><rect x="1865.39" y="347.2" width="0.48" height="1.7" fill="#cfcfc2" opacity="0.62"/><rect x="1865.88" y="347.2" width="9.21" height="1.7" fill="#27aeae" opacity="0.62"/><rect x="1875.10" y="347.2" width="0.97" height="1.7" fill="#cfcfc2" opacity="0.62"/><rect x="1876.07" y="347.2" width="8.73" height="1.7" fill="#cfcfc2" opacity="0.62"/><rect x="1884.80" y="347.2" width="1.46" height="1.7" fill="#cfcfc2" opacity="0.62"/><rect x="1886.73" y="347.2" width="0.48" height="1.7" fill="#cfcfc2" opacity="0.62"/><rect x="1865.88" y="349.2" width="8.73" height="1.7" fill="#cfcfc2" opacity="0.62"/><rect x="1874.61" y="349.2" width="0.48" height="1.7" fill="#cfcfc2" opacity="0.62"/><rect x="1875.10" y="349.2" width="1.94" height="1.7" fill="#cfcfc2" opacity="0.62"/><rect x="1877.04" y="349.2" width="0.48" height="1.7" fill="#cfcfc2" opacity="0.62"/><rect x="1878.01" y="349.2" width="6.30" height="1.7" fill="#cfcfc2" opacity="0.62"/><rect x="1884.31" y="349.2" width="0.97" height="1.7" fill="#cfcfc2" opacity="0.62"/><rect x="1863.94" y="351.2" width="0.48" height="1.7" fill="#3f8058" opacity="0.62"/><rect x="1862.00" y="353.2" width="0.48" height="1.7" fill="#3f8058" opacity="0.62"/><rect x="1862.00" y="357.2" width="4.37" height="1.7" fill="#cfcfc2" opacity="0.62"/><rect x="1866.37" y="357.2" width="0.97" height="1.7" fill="#cfcfc2" opacity="0.62"/><rect x="1867.34" y="357.2" width="3.88" height="1.7" fill="#cfcfc2" opacity="0.62"/><rect x="1871.70" y="357.2" width="4.37" height="1.7" fill="#cfcfc2" opacity="0.62"/><rect x="1876.07" y="357.2" width="0.97" height="1.7" fill="#cfcfc2" opacity="0.62"/><rect x="1877.04" y="357.2" width="3.88" height="1.7" fill="#cfcfc2" opacity="0.62"/><rect x="1880.91" y="357.2" width="0.97" height="1.7" fill="#cfcfc2" opacity="0.62"/><rect x="1882.37" y="357.2" width="2.42" height="1.7" fill="#2980b9" opacity="0.62"/><rect x="1862.00" y="359.2" width="0.48" height="1.7" fill="#3f8058" opacity="0.62"/><rect x="1863.94" y="361.2" width="2.91" height="1.7" fill="#fdbc4b" opacity="0.62"/><rect x="1867.34" y="361.2" width="9.21" height="1.7" fill="#27aeae" opacity="0.62"/><rect x="1876.55" y="361.2" width="0.97" height="1.7" fill="#cfcfc2" opacity="0.62"/><rect x="1877.52" y="361.2" width="3.88" height="1.7" fill="#cfcfc2" opacity="0.62"/><rect x="1881.40" y="361.2" width="1.46" height="1.7" fill="#cfcfc2" opacity="0.62"/><rect x="1862.00" y="363.2" width="0.48" height="1.7" fill="#3f8058" opacity="0.62"/><rect x="1862.00" y="367.2" width="1.94" height="1.7" fill="#2980b9" opacity="0.62"/><rect x="1864.42" y="367.2" width="4.37" height="1.7" fill="#cfcfc2" opacity="0.62"/><rect x="1868.79" y="367.2" width="0.97" height="1.7" fill="#cfcfc2" opacity="0.62"/><rect x="1869.76" y="367.2" width="5.33" height="1.7" fill="#cfcfc2" opacity="0.62"/><rect x="1875.10" y="367.2" width="0.48" height="1.7" fill="#cfcfc2" opacity="0.62"/><rect x="1875.58" y="367.2" width="3.40" height="1.7" fill="#0099ff" opacity="0.62"/><rect x="1879.46" y="367.2" width="0.48" height="1.7" fill="#cfcfc2" opacity="0.62"/><rect x="1879.94" y="367.2" width="3.40" height="1.7" fill="#cfcfc2" opacity="0.62"/><rect x="1883.34" y="367.2" width="0.48" height="1.7" fill="#cfcfc2" opacity="0.62"/><rect x="1884.31" y="367.2" width="2.91" height="1.7" fill="#0099ff" opacity="0.62"/><rect x="1887.70" y="367.2" width="0.48" height="1.7" fill="#cfcfc2" opacity="0.62"/><rect x="1888.19" y="367.2" width="2.42" height="1.7" fill="#cfcfc2" opacity="0.62"/><rect x="1890.62" y="367.2" width="0.48" height="1.7" fill="#cfcfc2" opacity="0.62"/><rect x="1862.00" y="369.2" width="0.48" height="1.7" fill="#3f8058" opacity="0.62"/><rect x="1863.94" y="371.2" width="3.88" height="1.7" fill="#0099ff" opacity="0.62"/><rect x="1867.82" y="371.2" width="0.48" height="1.7" fill="#cfcfc2" opacity="0.62"/><rect x="1868.31" y="371.2" width="5.82" height="1.7" fill="#8e44ad" opacity="0.62"/><rect x="1874.12" y="371.2" width="0.48" height="1.7" fill="#cfcfc2" opacity="0.62"/><rect x="1874.61" y="371.2" width="3.40" height="1.7" fill="#0099ff" opacity="0.62"/><rect x="1878.49" y="371.2" width="1.46" height="1.7" fill="#cfcfc2" opacity="0.62"/><rect x="1879.94" y="371.2" width="3.40" height="1.7" fill="#cfcfc2" opacity="0.62"/><rect x="1883.34" y="371.2" width="1.46" height="1.7" fill="#cfcfc2" opacity="0.62"/><rect x="1885.28" y="371.2" width="25.70" height="1.7" fill="#7a7c7d" opacity="0.62"/><rect x="1863.94" y="375.2" width="2.91" height="1.7" fill="#fdbc4b" opacity="0.62"/><rect x="1867.34" y="375.2" width="0.48" height="1.7" fill="#cfcfc2" opacity="0.62"/><rect x="1867.82" y="375.2" width="2.42" height="1.7" fill="#cfcfc2" opacity="0.62"/><rect x="1870.24" y="375.2" width="0.97" height="1.7" fill="#cfcfc2" opacity="0.62"/><rect x="1871.21" y="375.2" width="1.94" height="1.7" fill="#cfcfc2" opacity="0.62"/><rect x="1873.15" y="375.2" width="1.46" height="1.7" fill="#cfcfc2" opacity="0.62"/><rect x="1875.10" y="375.2" width="0.48" height="1.7" fill="#cfcfc2" opacity="0.62"/><rect x="1863.94" y="377.2" width="1.94" height="1.7" fill="#fdbc4b" opacity="0.62"/><rect x="1866.37" y="377.2" width="2.91" height="1.7" fill="#0099ff" opacity="0.62"/><rect x="1869.28" y="377.2" width="0.97" height="1.7" fill="#cfcfc2" opacity="0.62"/><rect x="1870.24" y="377.2" width="4.85" height="1.7" fill="#cfcfc2" opacity="0.62"/><rect x="1875.10" y="377.2" width="0.48" height="1.7" fill="#cfcfc2" opacity="0.62"/><rect x="1863.94" y="379.2" width="1.94" height="1.7" fill="#fdbc4b" opacity="0.62"/><rect x="1866.37" y="379.2" width="2.91" height="1.7" fill="#0099ff" opacity="0.62"/><rect x="1869.28" y="379.2" width="0.97" height="1.7" fill="#cfcfc2" opacity="0.62"/><rect x="1870.24" y="379.2" width="5.82" height="1.7" fill="#cfcfc2" opacity="0.62"/><rect x="1876.07" y="379.2" width="0.48" height="1.7" fill="#cfcfc2" opacity="0.62"/><rect x="1865.88" y="381.2" width="2.91" height="1.7" fill="#0099ff" opacity="0.62"/><rect x="1868.79" y="381.2" width="0.97" height="1.7" fill="#cfcfc2" opacity="0.62"/><rect x="1869.76" y="381.2" width="4.85" height="1.7" fill="#cfcfc2" opacity="0.62"/><rect x="1874.61" y="381.2" width="0.48" height="1.7" fill="#cfcfc2" opacity="0.62"/><rect x="1875.10" y="381.2" width="0.48" height="1.7" fill="#cfcfc2" opacity="0.62"/><rect x="1875.58" y="381.2" width="0.48" height="1.7" fill="#cfcfc2" opacity="0.62"/><rect x="1876.55" y="381.2" width="1.94" height="1.7" fill="#cfcfc2" opacity="0.62"/><rect x="1878.49" y="381.2" width="0.48" height="1.7" fill="#cfcfc2" opacity="0.62"/><rect x="1879.46" y="381.2" width="0.48" height="1.7" fill="#cfcfc2" opacity="0.62"/><rect x="1879.94" y="381.2" width="1.94" height="1.7" fill="#cfcfc2" opacity="0.62"/><rect x="1881.88" y="381.2" width="1.46" height="1.7" fill="#cfcfc2" opacity="0.62"/><rect x="1883.83" y="381.2" width="0.48" height="1.7" fill="#cfcfc2" opacity="0.62"/><rect x="1867.82" y="383.2" width="44.68" height="1.7" fill="#7a7c7d" opacity="0.62"/><rect x="1867.82" y="385.2" width="0.97" height="1.7" fill="#fdbc4b" opacity="0.62"/><rect x="1869.28" y="385.2" width="0.48" height="1.7" fill="#cfcfc2" opacity="0.62"/><rect x="1869.76" y="385.2" width="5.33" height="1.7" fill="#cfcfc2" opacity="0.62"/><rect x="1875.10" y="385.2" width="0.48" height="1.7" fill="#cfcfc2" opacity="0.62"/><rect x="1875.58" y="385.2" width="5.82" height="1.7" fill="#cfcfc2" opacity="0.62"/><rect x="1881.40" y="385.2" width="1.46" height="1.7" fill="#cfcfc2" opacity="0.62"/><rect x="1883.34" y="385.2" width="0.97" height="1.7" fill="#cfcfc2" opacity="0.62"/><rect x="1884.80" y="385.2" width="4.37" height="1.7" fill="#cfcfc2" opacity="0.62"/><rect x="1889.16" y="385.2" width="0.97" height="1.7" fill="#cfcfc2" opacity="0.62"/><rect x="1890.62" y="385.2" width="0.97" height="1.7" fill="#cfcfc2" opacity="0.62"/><rect x="1892.07" y="385.2" width="0.48" height="1.7" fill="#cfcfc2" opacity="0.62"/><rect x="1892.56" y="385.2" width="8.73" height="1.7" fill="#cfcfc2" opacity="0.62"/><rect x="1901.29" y="385.2" width="1.46" height="1.7" fill="#cfcfc2" opacity="0.62"/><rect x="1903.22" y="385.2" width="0.48" height="1.7" fill="#cfcfc2" opacity="0.62"/><rect x="1869.76" y="387.2" width="8.73" height="1.7" fill="#cfcfc2" opacity="0.62"/><rect x="1878.49" y="387.2" width="0.48" height="1.7" fill="#cfcfc2" opacity="0.62"/><rect x="1878.97" y="387.2" width="1.94" height="1.7" fill="#cfcfc2" opacity="0.62"/><rect x="1880.91" y="387.2" width="0.48" height="1.7" fill="#cfcfc2" opacity="0.62"/><rect x="1881.88" y="387.2" width="6.30" height="1.7" fill="#cfcfc2" opacity="0.62"/><rect x="1888.19" y="387.2" width="0.97" height="1.7" fill="#cfcfc2" opacity="0.62"/><rect x="1867.82" y="389.2" width="0.48" height="1.7" fill="#3f8058" opacity="0.62"/><rect x="1865.88" y="391.2" width="1.46" height="1.7" fill="#3f8058" opacity="0.62"/><rect x="1865.88" y="393.2" width="7.76" height="1.7" fill="#7a7c7d" opacity="0.62"/><rect x="1863.94" y="395.2" width="3.40" height="1.7" fill="#fdbc4b" opacity="0.62"/><rect x="1867.34" y="395.2" width="0.48" height="1.7" fill="#cfcfc2" opacity="0.62"/><rect x="1865.88" y="397.2" width="2.91" height="1.7" fill="#fdbc4b" opacity="0.62"/><rect x="1869.28" y="397.2" width="2.42" height="1.7" fill="#cfcfc2" opacity="0.62"/><rect x="1871.70" y="397.2" width="0.48" height="1.7" fill="#cfcfc2" opacity="0.62"/><rect x="1863.94" y="399.2" width="0.48" height="1.7" fill="#3f8058" opacity="0.62"/><rect x="1862.00" y="401.2" width="0.48" height="1.7" fill="#3f8058" opacity="0.62"/><rect x="1862.00" y="405.2" width="1.94" height="1.7" fill="#2980b9" opacity="0.62"/><rect x="1864.42" y="405.2" width="4.37" height="1.7" fill="#cfcfc2" opacity="0.62"/><rect x="1868.79" y="405.2" width="0.97" height="1.7" fill="#cfcfc2" opacity="0.62"/><rect x="1869.76" y="405.2" width="5.33" height="1.7" fill="#cfcfc2" opacity="0.62"/><rect x="1875.10" y="405.2" width="0.48" height="1.7" fill="#cfcfc2" opacity="0.62"/><rect x="1875.58" y="405.2" width="5.82" height="1.7" fill="#0099ff" opacity="0.62"/><rect x="1881.88" y="405.2" width="0.48" height="1.7" fill="#cfcfc2" opacity="0.62"/><rect x="1882.37" y="405.2" width="5.33" height="1.7" fill="#cfcfc2" opacity="0.62"/><rect x="1887.70" y="405.2" width="0.48" height="1.7" fill="#cfcfc2" opacity="0.62"/><rect x="1862.00" y="407.2" width="0.48" height="1.7" fill="#3f8058" opacity="0.62"/><rect x="1863.94" y="409.2" width="0.97" height="1.7" fill="#fdbc4b" opacity="0.62"/><rect x="1865.39" y="409.2" width="0.48" height="1.7" fill="#cfcfc2" opacity="0.62"/><rect x="1865.88" y="409.2" width="5.33" height="1.7" fill="#cfcfc2" opacity="0.62"/><rect x="1871.21" y="409.2" width="0.97" height="1.7" fill="#cfcfc2" opacity="0.62"/><rect x="1872.18" y="409.2" width="3.40" height="1.7" fill="#cfcfc2" opacity="0.62"/><rect x="1875.58" y="409.2" width="1.46" height="1.7" fill="#cfcfc2" opacity="0.62"/><rect x="1877.04" y="409.2" width="2.42" height="1.7" fill="#cfcfc2" opacity="0.62"/><rect x="1879.46" y="409.2" width="0.97" height="1.7" fill="#cfcfc2" opacity="0.62"/><rect x="1880.91" y="409.2" width="0.97" height="1.7" fill="#cfcfc2" opacity="0.62"/><rect x="1882.37" y="409.2" width="5.33" height="1.7" fill="#cfcfc2" opacity="0.62"/><rect x="1887.70" y="409.2" width="0.97" height="1.7" fill="#cfcfc2" opacity="0.62"/><rect x="1888.67" y="409.2" width="1.94" height="1.7" fill="#cfcfc2" opacity="0.62"/><rect x="1890.62" y="409.2" width="1.46" height="1.7" fill="#cfcfc2" opacity="0.62"/><rect x="1892.07" y="409.2" width="2.42" height="1.7" fill="#cfcfc2" opacity="0.62"/><rect x="1894.49" y="409.2" width="1.46" height="1.7" fill="#cfcfc2" opacity="0.62"/><rect x="1896.43" y="409.2" width="0.48" height="1.7" fill="#cfcfc2" opacity="0.62"/><rect x="1865.88" y="411.2" width="31.52" height="1.7" fill="#7a7c7d" opacity="0.62"/><rect x="1865.88" y="413.2" width="2.91" height="1.7" fill="#fdbc4b" opacity="0.62"/><rect x="1869.28" y="413.2" width="9.70" height="1.7" fill="#cfcfc2" opacity="0.62"/><rect x="1878.97" y="413.2" width="0.97" height="1.7" fill="#cfcfc2" opacity="0.62"/><rect x="1879.94" y="413.2" width="5.33" height="1.7" fill="#cfcfc2" opacity="0.62"/><rect x="1885.28" y="413.2" width="0.48" height="1.7" fill="#cfcfc2" opacity="0.62"/><rect x="1885.77" y="413.2" width="5.33" height="1.7" fill="#cfcfc2" opacity="0.62"/><rect x="1891.10" y="413.2" width="0.97" height="1.7" fill="#cfcfc2" opacity="0.62"/><rect x="1863.94" y="415.2" width="0.48" height="1.7" fill="#3f8058" opacity="0.62"/><rect x="1863.94" y="419.2" width="9.21" height="1.7" fill="#27aeae" opacity="0.62"/><rect x="1873.15" y="419.2" width="0.97" height="1.7" fill="#cfcfc2" opacity="0.62"/><rect x="1874.12" y="419.2" width="8.73" height="1.7" fill="#cfcfc2" opacity="0.62"/><rect x="1882.86" y="419.2" width="0.48" height="1.7" fill="#cfcfc2" opacity="0.62"/><rect x="1883.34" y="419.2" width="2.42" height="1.7" fill="#cfcfc2" opacity="0.62"/><rect x="1885.77" y="419.2" width="1.94" height="1.7" fill="#cfcfc2" opacity="0.62"/><rect x="1863.94" y="423.2" width="2.91" height="1.7" fill="#fdbc4b" opacity="0.62"/><rect x="1867.34" y="423.2" width="9.70" height="1.7" fill="#cfcfc2" opacity="0.62"/><rect x="1877.04" y="423.2" width="0.97" height="1.7" fill="#cfcfc2" opacity="0.62"/><rect x="1878.01" y="423.2" width="5.33" height="1.7" fill="#cfcfc2" opacity="0.62"/><rect x="1883.34" y="423.2" width="0.48" height="1.7" fill="#cfcfc2" opacity="0.62"/><rect x="1883.83" y="423.2" width="5.33" height="1.7" fill="#cfcfc2" opacity="0.62"/><rect x="1889.16" y="423.2" width="0.97" height="1.7" fill="#cfcfc2" opacity="0.62"/><rect x="1862.00" y="425.2" width="0.48" height="1.7" fill="#3f8058" opacity="0.62"/><rect x="1862.00" y="429.2" width="1.46" height="1.7" fill="#2980b9" opacity="0.62"/><rect x="1863.94" y="429.2" width="4.37" height="1.7" fill="#cfcfc2" opacity="0.62"/><rect x="1868.31" y="429.2" width="0.97" height="1.7" fill="#cfcfc2" opacity="0.62"/><rect x="1869.28" y="429.2" width="7.27" height="1.7" fill="#cfcfc2" opacity="0.62"/><rect x="1876.55" y="429.2" width="0.97" height="1.7" fill="#cfcfc2" opacity="0.62"/><rect x="1878.01" y="429.2" width="2.42" height="1.7" fill="#2980b9" opacity="0.62"/><rect x="1862.00" y="431.2" width="0.48" height="1.7" fill="#3f8058" opacity="0.62"/><rect x="1863.94" y="433.2" width="2.91" height="1.7" fill="#fdbc4b" opacity="0.62"/><rect x="1867.34" y="433.2" width="9.21" height="1.7" fill="#27aeae" opacity="0.62"/><rect x="1876.55" y="433.2" width="0.97" height="1.7" fill="#cfcfc2" opacity="0.62"/><rect x="1877.52" y="433.2" width="3.88" height="1.7" fill="#cfcfc2" opacity="0.62"/><rect x="1881.40" y="433.2" width="1.46" height="1.7" fill="#cfcfc2" opacity="0.62"/><rect x="1882.86" y="433.2" width="2.91" height="1.7" fill="#cfcfc2" opacity="0.62"/><rect x="1885.77" y="433.2" width="1.46" height="1.7" fill="#cfcfc2" opacity="0.62"/><rect x="1862.00" y="435.2" width="0.48" height="1.7" fill="#3f8058" opacity="0.62"/></svg><div class="b" style="left:1854px;top:189px;width:1px;height:891px;background:#2b2f33;"></div><div class="b" style="left:1856px;top:1076px;width:58px;height:3px;background:#33373b;"></div><div class="b" style="left:513px;top:290px;width:2px;height:18px;background:#fcfcfc;"></div></div></div><div class="b" style="left:0px;top:1079px;width:1916px;height:1px;background:#5a5e62;"></div><div class="b" style="left:0px;top:1080px;width:1916px;height:40px;background:#2a2e32;"></div><div class="b" style="left:2px;top:1081px;width:100px;height:37px;background:#3a3b3d;border-radius:6px"></div><span class="t " style="left:38px;top:1087.50px;height:24px;line-height:24px;font-size:17.5px;color:#fcfcfc;letter-spacing:0.891px;">Output</span><span class="t " style="left:137px;top:1087.50px;height:24px;line-height:24px;font-size:17.5px;color:#fcfcfc;letter-spacing:0.153px;">Diagnostics</span><span class="t " style="left:271px;top:1087.50px;height:24px;line-height:24px;font-size:17.5px;color:#fcfcfc;letter-spacing:-0.691px;">Search</span><span class="t " style="left:365px;top:1087.50px;height:24px;line-height:24px;font-size:17.5px;color:#fcfcfc;letter-spacing:-0.078px;">Project</span><span class="t " style="left:461px;top:1087.50px;height:24px;line-height:24px;font-size:17.5px;color:#fcfcfc;letter-spacing:-0.163px;">Terminal</span><span class="t " style="left:1440px;top:1087.50px;height:24px;line-height:24px;font-size:17.5px;color:#fcfcfc;letter-spacing:0.103px;">master</span><span class="t " style="left:1513px;top:1087.50px;height:24px;line-height:24px;font-size:17.5px;color:#fcfcfc;letter-spacing:-0.021px;">28:9</span><span class="t " style="left:1563px;top:1087.50px;height:24px;line-height:24px;font-size:17.5px;color:#fcfcfc;letter-spacing:-1.572px;">INSERT</span><span class="t " style="left:1635px;top:1087.50px;height:24px;line-height:24px;font-size:17.5px;color:#fcfcfc;letter-spacing:-1.129px;">de_DE</span><span class="t " style="left:1700px;top:1087.50px;height:24px;line-height:24px;font-size:17.5px;color:#fcfcfc;letter-spacing:-0.010px;">Soft Tabs: 4</span><span class="t " style="left:1808px;top:1087.50px;height:24px;line-height:24px;font-size:17.5px;color:#fcfcfc;letter-spacing:-0.645px;">UTF-8</span><span class="t " style="left:1871px;top:1087.50px;height:24px;line-height:24px;font-size:17.5px;color:#fcfcfc;letter-spacing:0.461px;">C++</span><svg class="b" style="left:0;top:0" width="1916" height="1120" viewBox="0 0 1916 1120"><defs><linearGradient id="kg" x1="0" y1="0" x2="1" y2="1"><stop offset="0" stop-color="#0cb8ff"/><stop offset="1" stop-color="#2b74ee"/></linearGradient></defs><circle cx="25" cy="22" r="10" fill="url(#kg)"/><g transform="translate(15 12)"><ellipse cx="11" cy="3.8" rx="1.5" ry="0.9" fill="#0a5fe4" opacity=".85"/><ellipse cx="7.8" cy="10.9" rx="2.1" ry="1.9" fill="#0a66e8" opacity=".8"/><path d="M3.1 4.6C5 3.2 7.5 1.9 11.9 2.3C10.3 3 9.7 3.8 9.6 4.9C11.5 5.3 13.8 4.8 16.3 3.8C15 6.3 12.5 7.8 9.9 8.6C7.8 9 6.2 9.3 5.6 10C5.1 10.4 4.9 10.8 4.9 11.2C4 9.8 4.3 8.2 5.9 7.1C6.8 6.4 7.5 5.9 7.3 5.4C6.5 5 5 4.8 3.1 4.6Z" fill="#e6e8ec"/><path d="M10.1 8.7C9.9 10.5 9.4 12.4 7.3 13.7C9.5 14.3 11.5 15.5 13.3 17.2C12.5 15 12.1 13.3 12.2 11.8C13.2 12.6 14.4 13.4 15.6 13.7L17.9 13.7C16 12 13.6 10.2 11 8.7Z" fill="#d9dce0"/></g><g fill="none" stroke="#fcfcfc" stroke-width="1.2"><path d="M1732 22.5H1747"/><rect x="1801.6" y="15.4" width="14" height="14" rx="2"/><path d="M1872 15L1887 30M1887 15L1872 30"/></g><g fill="none" stroke="#fcfcfc" stroke-width="1.4"><path d="M32.2 97.7H23.5V112.3H31.6M36.4 102.2V108.2"/><path d="M34.4 108.4V113.1M31.9 110.6H37.1" stroke-width="1.3"/><path d="M115 97.7H106.4V112.3H110.9M119.3 102.2V105.5"/><path d="M112 108.2V112.3H119.3V108.2"/><path d="M200.7 103.2L206 108.2L211.2 103.2" stroke-width="1.2"/><path d="M238.6 97.7H250.8L253.3 100.2V112.3H238.6Z"/><path d="M242.1 97.7V112.3M242.1 105.2H250.4V112.3M242.1 101H247.3"/><path d="M247.4 97.7V101.7" stroke-width="1.7"/><path d="M331 112.3H322.3V97.7H334.6L337.2 100.3V103.8"/><path d="M325.8 97.7V112.3M325.8 105.2H331.6M325.8 101H331"/><path d="M331.2 97.7V101.7" stroke-width="1.7"/><path d="M333 111.6L338.3 106.8" stroke-width="3.1" stroke-linecap="round"/><path d="M333.4 111.2L337.9 107.2" stroke="#31363b" stroke-width="0.8"/></g><path d="M31.9 97.2L37 102.5H31.9Z" fill="#fcfcfc"/><path d="M114.7 97.2L120 102.7H114.7Z" fill="#fcfcfc"/><path d="M111.3 106.1H115L116 107.2H120V109H111.3Z" fill="#fcfcfc"/><g fill="none" stroke="#595d61" stroke-width="1.2"><path d="M460.3 97.4L456.1 100.5L460.3 103.6"/><path d="M456.6 100.6C462 99.6 468 101.5 467.8 107C467.6 111 464 113 460.2 112.9"/><path d="M555.6 97.4L559.8 100.5L555.6 103.6"/><path d="M559.3 100.6C553.9 99.6 547.9 101.5 548.1 107C548.3 111 551.9 113 555.7 112.9"/></g><g fill="none" stroke="#fcfcfc" stroke-width="2.2"><path d="M15 140.9H22.6L26.5 144V158.9H15Z"/><path d="M21 145.4H28L35 151.4V163H21Z" fill="#2a2e32"/></g><path d="M27.9 144.3L36.1 150.6V152.6H27.9Z" fill="#fcfcfc"/><path d="M22.4 139.8L26 142.6V144.3H22.4Z" fill="#fcfcfc"/><rect x="13" y="185" width="22.2" height="21.9" fill="none" stroke="#fcfcfc" stroke-width="2.2"/><rect x="11.9" y="183.9" width="24.4" height="6.1" fill="#fcfcfc"/><g fill="#fcfcfc"><rect x="15.9" y="191.9" width="4.1" height="4.1"/><rect x="15.9" y="200" width="4.1" height="4"/><rect x="21.9" y="193.9" width="10.1" height="2.1"/><rect x="21.9" y="200" width="10.1" height="2.1"/></g><rect x="12.45" y="228.45" width="22.9" height="22.9" rx="2.2" transform="rotate(45 23.9 239.9)" fill="#fcfcfc"/><g stroke="#43474b" stroke-width="2" fill="none"><path d="M18.6 227.6L24.1 233.1V246.9M24.1 233.1L30.9 240.2"/></g><g fill="#43474b"><circle cx="24.1" cy="233.1" r="2.5"/><circle cx="23.9" cy="246.9" r="2.6"/><circle cx="30.9" cy="240.25" r="2.5"/></g><path d="M18.3 272.1L13.9 277.9H16.3L15.3 281.6L20 275.6H17.4Z" fill="#fcfcfc"/><g fill="#fcfcfc"><rect x="27.9" y="271.8" width="6.4" height="6"/><rect x="27.9" y="290.1" width="6.4" height="5.7"/></g><path d="M28 275H25V293H28" fill="none" stroke="#fcfcfc" stroke-width="2.2"/><rect x="58.5" y="139.7" width="17" height="16.6" fill="none" stroke="#fcfcfc" stroke-width="1.4"/><rect x="57.8" y="139" width="18.4" height="4.5" fill="#ededed"/><g fill="#fcfcfc"><rect x="61.4" y="145.7" width="2.7" height="2.7"/><rect x="61.4" y="151" width="2.7" height="2.6"/><rect x="65.7" y="146.8" width="7.4" height="1.3"/><rect x="65.7" y="151.5" width="7.4" height="1.3"/></g><g fill="none" stroke="#fcfcfc" stroke-width="1.3"><circle cx="110.45" cy="185.4" r="3.3"/><path d="M110.45 177V182.1M110.45 188.7V193.8"/></g><path d="M297.8 146L303 151.2L308.2 146" fill="none" stroke="#fcfcfc" stroke-width="1.2"/><g fill="none" stroke="#fcfcfc" stroke-width="1.3"><path d="M324.73 146.46A8.3 8.3 0 0 1 341.07 146.46M341.07 149.34A8.3 8.3 0 0 1 324.73 149.34"/><path d="M342.1 139.9V145.9H336.2M324.3 156.1V150.5H329.9"/></g><g fill="none" stroke="#fcfcfc" stroke-width="1.3"><path d="M260.5 176.4V189.6M255.4 181.8L260.5 176.5L265.5 181.8"/><path d="M296.3 175.9V189M291.2 184.1L296.3 189.2L301.5 184.1"/></g><g fill="#fcfcfc"><rect x="255.2" y="190.1" width="10.6" height="3.7"/><rect x="291.2" y="190.1" width="10.6" height="3.7"/><rect x="323.9" y="178.6" width="18.2" height="2.4"/><rect x="323.9" y="183.9" width="18.2" height="2.4"/><rect x="323.9" y="189.3" width="18.2" height="2.4"/></g><g transform="translate(0 0)" fill="none" stroke="#1d72e8" stroke-width="1.5"><path d="M68.9 279.4A4.6 4.6 0 1 0 68.9 285.6"/><path d="M68.3 270.1V275.8M65.6 272.9H71M75.2 270.1V275.8M72.4 272.9H78" stroke-width="1.6"/></g><g transform="translate(375 -133)" fill="none" stroke="#1d72e8" stroke-width="1.5"><path d="M68.9 279.4A4.6 4.6 0 1 0 68.9 285.6"/><path d="M68.3 270.1V275.8M65.6 272.9H71M75.2 270.1V275.8M72.4 272.9H78" stroke-width="1.6"/></g><g fill="none" stroke="#a3a5a7" stroke-width="1.3"><path d="M373.9 138.3L365.2 146.8L373.9 155.4M402 138.3L410.7 146.8L402 155.4"/><path d="M420.1 173.1L424.1 177L420.1 180.8M555.1 173.1L559.1 177L555.1 180.8" stroke-width="1.2"/></g><path d="M1860.9 140.5L1856.8 147.5L1859.8 148.1L1858.7 153.4L1863.4 146.3L1860.5 145.8Z" fill="#fcfcfc"/><g fill="none" stroke="#fcfcfc" stroke-width="1.3"><rect x="1887.5" y="138.6" width="7" height="16.9" rx="0.8"/><rect x="1896.6" y="138.6" width="7.9" height="16.9" rx="0.8"/></g><rect x="1886.9" y="137.9" width="8.2" height="4.6" fill="#fcfcfc"/><rect x="1895.9" y="137.9" width="9.2" height="4.6" fill="#fcfcfc"/><g fill="none" stroke="#d6d6d6" stroke-width="1.5"><rect x="11.7" y="1092.2" width="16.6" height="10.6" rx="1"/><rect x="110.9" y="1092.2" width="16.6" height="10.6" rx="1"/></g><path d="M11 1103L14.6 1106.8L15.4 1103Z" fill="#fcfcfc"/><path d="M110.2 1103L113.8 1106.8L114.6 1103Z" fill="#fcfcfc"/><rect x="118" y="1094.6" width="2.1" height="4.3" fill="#fcfcfc"/><rect x="118" y="1100.2" width="2.1" height="1.6" fill="#fcfcfc"/><g fill="none" stroke="#d6d6d6" stroke-width="1.4"><circle cx="251" cy="1096.9" r="6.2"/><path d="M255.4 1101.4L261.3 1107"/></g><rect x="338.5" y="1090.6" width="16.9" height="16.6" fill="none" stroke="#fcfcfc" stroke-width="1.4"/><rect x="337.8" y="1089.9" width="18.3" height="4.2" fill="#fcfcfc"/><g fill="#fcfcfc"><rect x="340.6" y="1095.8" width="4.2" height="3.3"/><rect x="346.2" y="1096" width="7.8" height="1.3"/><rect x="346.2" y="1098.2" width="7.8" height="1.3"/><rect x="340.6" y="1101" width="13.4" height="1.4"/><rect x="340.6" y="1103.9" width="13.4" height="1.4"/></g><g fill="none" stroke="#d6d6d6" stroke-width="1.4"><rect x="434.7" y="1090.8" width="16.5" height="16.4" rx="0.8"/><path d="M437.2 1094.8L441.4 1097.8L437.2 1101M442.8 1104H448.4" stroke-width="1.3"/></g><g fill="none" stroke="#e4e4e4" stroke-width="1.2"><circle cx="1417.90" cy="1092.75" r="2.25"/><circle cx="1417.90" cy="1104.90" r="2.25"/><path d="M1417.90 1095.00V1102.65M1417.90 1098.50H1426.30Q1428.90 1098.50 1428.90 1095.95V1095.30"/></g><circle cx="1428.90" cy="1093.05" r="2.25" fill="none" stroke="#3daee9" stroke-width="1.3"/></svg><div id="pop"><div id="popin"><div class="b" style="left:564px;top:176px;width:788px;height:490px;background:#1b1e20;"></div><div class="b" style="left:564px;top:137.8px;width:788.2px;height:38.4px;background:#1b1e20;border:1.4px solid #3daee9;border-radius:4px"></div><span class="t " style="left:572px;top:146.00px;height:24px;line-height:24px;font-size:17.5px;color:#8f9193;letter-spacing:-0.132px;">Select branch to checkout. Press 'Esc' to cancel.</span><div class="b" style="left:564px;top:176.3px;width:767.4px;height:29.6px;background:#1f485e;"></div><div class="b" style="left:1331.4px;top:176.3px;width:1px;height:489.7px;background:#676b6f;"></div><div class="b" style="left:1338px;top:179px;width:8.3px;height:56px;background:#4f5356;border-radius:4.2px;border:1px solid #6b6e71"></div><span class="t " style="left:570px;top:179.50px;height:24px;line-height:24px;font-size:17.5px;color:#fcfcfc;font-weight:700;letter-spacing:0.135px;">+ Create New Branch</span><span class="t " style="left:570px;top:209.50px;height:24px;line-height:24px;font-size:17.5px;color:#fcfcfc;font-weight:700;letter-spacing:0.086px;">+ Create New Branch From...</span><span class="t " style="left:592px;top:239.50px;height:24px;line-height:24px;font-size:17.5px;color:#fcfcfc;letter-spacing:0.350px;">origin/work/kcolorschememanager</span><span class="t " style="left:875px;top:239.50px;height:24px;line-height:24px;font-size:17.5px;color:#a1a3a4;font-style:italic;letter-spacing:-0.094px;">remote</span><svg class="b" style="left:562px;top:236.5px;" width="30" height="30" viewBox="0 0 30 30"><g fill="none" stroke="#e4e4e4" stroke-width="1.2"><circle cx="10.50" cy="8.50" r="2.07"/><circle cx="10.50" cy="19.65" r="2.07"/><path d="M10.50 10.57V17.59M10.50 13.78H18.21Q20.60 13.78 20.60 11.44V10.87"/></g><circle cx="20.60" cy="8.78" r="2.07" fill="none" stroke="#3daee9" stroke-width="1.3"/></svg><span class="t " style="left:592px;top:269.50px;height:24px;line-height:24px;font-size:17.5px;color:#fcfcfc;letter-spacing:0.411px;">origin/work/win-breeze-style</span><span class="t " style="left:826px;top:269.50px;height:24px;line-height:24px;font-size:17.5px;color:#a1a3a4;font-style:italic;letter-spacing:-0.094px;">remote</span><svg class="b" style="left:562px;top:266.5px;" width="30" height="30" viewBox="0 0 30 30"><g fill="none" stroke="#e4e4e4" stroke-width="1.2"><circle cx="10.50" cy="8.50" r="2.07"/><circle cx="10.50" cy="19.65" r="2.07"/><path d="M10.50 10.57V17.59M10.50 13.78H18.21Q20.60 13.78 20.60 11.44V10.87"/></g><circle cx="20.60" cy="8.78" r="2.07" fill="none" stroke="#3daee9" stroke-width="1.3"/></svg><span class="t " style="left:592px;top:299.50px;height:24px;line-height:24px;font-size:17.5px;color:#fcfcfc;letter-spacing:0.747px;">origin/work/rmb-windows</span><span class="t " style="left:807px;top:299.50px;height:24px;line-height:24px;font-size:17.5px;color:#a1a3a4;font-style:italic;letter-spacing:-0.094px;">remote</span><svg class="b" style="left:562px;top:296.5px;" width="30" height="30" viewBox="0 0 30 30"><g fill="none" stroke="#e4e4e4" stroke-width="1.2"><circle cx="10.50" cy="8.50" r="2.07"/><circle cx="10.50" cy="19.65" r="2.07"/><path d="M10.50 10.57V17.59M10.50 13.78H18.21Q20.60 13.78 20.60 11.44V10.87"/></g><circle cx="20.60" cy="8.78" r="2.07" fill="none" stroke="#3daee9" stroke-width="1.3"/></svg><span class="t " style="left:592px;top:329.50px;height:24px;line-height:24px;font-size:17.5px;color:#fcfcfc;letter-spacing:0.103px;">master</span><span class="t " style="left:652px;top:329.50px;height:24px;line-height:24px;font-size:17.5px;color:#a1a3a4;font-style:italic;letter-spacing:0.250px;">local</span><svg class="b" style="left:562px;top:326.5px;" width="30" height="30" viewBox="0 0 30 30"><g fill="none" stroke="#e4e4e4" stroke-width="1.2"><circle cx="10.50" cy="8.50" r="2.07"/><circle cx="10.50" cy="19.65" r="2.07"/><path d="M10.50 10.57V17.59M10.50 13.78H18.21Q20.60 13.78 20.60 11.44V10.87"/></g><circle cx="20.60" cy="8.78" r="2.07" fill="none" stroke="#3daee9" stroke-width="1.3"/></svg><span class="t " style="left:592px;top:359.50px;height:24px;line-height:24px;font-size:17.5px;color:#fcfcfc;letter-spacing:0.370px;">origin/HEAD</span><span class="t " style="left:698px;top:359.50px;height:24px;line-height:24px;font-size:17.5px;color:#a1a3a4;font-style:italic;letter-spacing:-0.094px;">remote</span><svg class="b" style="left:562px;top:356.5px;" width="30" height="30" viewBox="0 0 30 30"><g fill="none" stroke="#e4e4e4" stroke-width="1.2"><circle cx="10.50" cy="8.50" r="2.07"/><circle cx="10.50" cy="19.65" r="2.07"/><path d="M10.50 10.57V17.59M10.50 13.78H18.21Q20.60 13.78 20.60 11.44V10.87"/></g><circle cx="20.60" cy="8.78" r="2.07" fill="none" stroke="#3daee9" stroke-width="1.3"/></svg><span class="t " style="left:592px;top:389.50px;height:24px;line-height:24px;font-size:17.5px;color:#fcfcfc;letter-spacing:0.487px;">origin/master</span><span class="t " style="left:705px;top:389.50px;height:24px;line-height:24px;font-size:17.5px;color:#a1a3a4;font-style:italic;letter-spacing:-0.094px;">remote</span><svg class="b" style="left:562px;top:386.5px;" width="30" height="30" viewBox="0 0 30 30"><g fill="none" stroke="#e4e4e4" stroke-width="1.2"><circle cx="10.50" cy="8.50" r="2.07"/><circle cx="10.50" cy="19.65" r="2.07"/><path d="M10.50 10.57V17.59M10.50 13.78H18.21Q20.60 13.78 20.60 11.44V10.87"/></g><circle cx="20.60" cy="8.78" r="2.07" fill="none" stroke="#3daee9" stroke-width="1.3"/></svg><span class="t " style="left:592px;top:419.50px;height:24px;line-height:24px;font-size:17.5px;color:#fcfcfc;letter-spacing:0.441px;">origin/work/genericity/readonly-banner</span><span class="t " style="left:911px;top:419.50px;height:24px;line-height:24px;font-size:17.5px;color:#a1a3a4;font-style:italic;letter-spacing:-0.094px;">remote</span><svg class="b" style="left:562px;top:416.5px;" width="30" height="30" viewBox="0 0 30 30"><g fill="none" stroke="#e4e4e4" stroke-width="1.2"><circle cx="10.50" cy="8.50" r="2.07"/><circle cx="10.50" cy="19.65" r="2.07"/><path d="M10.50 10.57V17.59M10.50 13.78H18.21Q20.60 13.78 20.60 11.44V10.87"/></g><circle cx="20.60" cy="8.78" r="2.07" fill="none" stroke="#3daee9" stroke-width="1.3"/></svg><span class="t " style="left:592px;top:449.50px;height:24px;line-height:24px;font-size:17.5px;color:#fcfcfc;letter-spacing:0.225px;">origin/release/24.02</span><span class="t " style="left:756px;top:449.50px;height:24px;line-height:24px;font-size:17.5px;color:#a1a3a4;font-style:italic;letter-spacing:-0.094px;">remote</span><svg class="b" style="left:562px;top:446.5px;" width="30" height="30" viewBox="0 0 30 30"><g fill="none" stroke="#e4e4e4" stroke-width="1.2"><circle cx="10.50" cy="8.50" r="2.07"/><circle cx="10.50" cy="19.65" r="2.07"/><path d="M10.50 10.57V17.59M10.50 13.78H18.21Q20.60 13.78 20.60 11.44V10.87"/></g><circle cx="20.60" cy="8.78" r="2.07" fill="none" stroke="#3daee9" stroke-width="1.3"/></svg><span class="t " style="left:592px;top:479.50px;height:24px;line-height:24px;font-size:17.5px;color:#fcfcfc;letter-spacing:0.464px;">origin/work/genericity/navigator-readonly-icon</span><span class="t " style="left:971px;top:479.50px;height:24px;line-height:24px;font-size:17.5px;color:#a1a3a4;font-style:italic;letter-spacing:-0.094px;">remote</span><svg class="b" style="left:562px;top:476.5px;" width="30" height="30" viewBox="0 0 30 30"><g fill="none" stroke="#e4e4e4" stroke-width="1.2"><circle cx="10.50" cy="8.50" r="2.07"/><circle cx="10.50" cy="19.65" r="2.07"/><path d="M10.50 10.57V17.59M10.50 13.78H18.21Q20.60 13.78 20.60 11.44V10.87"/></g><circle cx="20.60" cy="8.78" r="2.07" fill="none" stroke="#3daee9" stroke-width="1.3"/></svg><span class="t " style="left:592px;top:509.50px;height:24px;line-height:24px;font-size:17.5px;color:#fcfcfc;letter-spacing:0.612px;">origin/work/meven/cd-craft-build</span><span class="t " style="left:865px;top:509.50px;height:24px;line-height:24px;font-size:17.5px;color:#a1a3a4;font-style:italic;letter-spacing:-0.094px;">remote</span><svg class="b" style="left:562px;top:506.5px;" width="30" height="30" viewBox="0 0 30 30"><g fill="none" stroke="#e4e4e4" stroke-width="1.2"><circle cx="10.50" cy="8.50" r="2.07"/><circle cx="10.50" cy="19.65" r="2.07"/><path d="M10.50 10.57V17.59M10.50 13.78H18.21Q20.60 13.78 20.60 11.44V10.87"/></g><circle cx="20.60" cy="8.78" r="2.07" fill="none" stroke="#3daee9" stroke-width="1.3"/></svg><span class="t " style="left:592px;top:539.50px;height:24px;line-height:24px;font-size:17.5px;color:#fcfcfc;letter-spacing:0.569px;">origin/meven/cd-craft-build</span><span class="t " style="left:819px;top:539.50px;height:24px;line-height:24px;font-size:17.5px;color:#a1a3a4;font-style:italic;letter-spacing:-0.094px;">remote</span><svg class="b" style="left:562px;top:536.5px;" width="30" height="30" viewBox="0 0 30 30"><g fill="none" stroke="#e4e4e4" stroke-width="1.2"><circle cx="10.50" cy="8.50" r="2.07"/><circle cx="10.50" cy="19.65" r="2.07"/><path d="M10.50 10.57V17.59M10.50 13.78H18.21Q20.60 13.78 20.60 11.44V10.87"/></g><circle cx="20.60" cy="8.78" r="2.07" fill="none" stroke="#3daee9" stroke-width="1.3"/></svg><span class="t " style="left:592px;top:569.50px;height:24px;line-height:24px;font-size:17.5px;color:#fcfcfc;letter-spacing:0.394px;">origin/work/merritt/disable-indexed-search</span><span class="t " style="left:939px;top:569.50px;height:24px;line-height:24px;font-size:17.5px;color:#a1a3a4;font-style:italic;letter-spacing:-0.094px;">remote</span><svg class="b" style="left:562px;top:566.5px;" width="30" height="30" viewBox="0 0 30 30"><g fill="none" stroke="#e4e4e4" stroke-width="1.2"><circle cx="10.50" cy="8.50" r="2.07"/><circle cx="10.50" cy="19.65" r="2.07"/><path d="M10.50 10.57V17.59M10.50 13.78H18.21Q20.60 13.78 20.60 11.44V10.87"/></g><circle cx="20.60" cy="8.78" r="2.07" fill="none" stroke="#3daee9" stroke-width="1.3"/></svg><span class="t " style="left:592px;top:599.50px;height:24px;line-height:24px;font-size:17.5px;color:#fcfcfc;letter-spacing:0.225px;">origin/release/23.08</span><span class="t " style="left:756px;top:599.50px;height:24px;line-height:24px;font-size:17.5px;color:#a1a3a4;font-style:italic;letter-spacing:-0.094px;">remote</span><svg class="b" style="left:562px;top:596.5px;" width="30" height="30" viewBox="0 0 30 30"><g fill="none" stroke="#e4e4e4" stroke-width="1.2"><circle cx="10.50" cy="8.50" r="2.07"/><circle cx="10.50" cy="19.65" r="2.07"/><path d="M10.50 10.57V17.59M10.50 13.78H18.21Q20.60 13.78 20.60 11.44V10.87"/></g><circle cx="20.60" cy="8.78" r="2.07" fill="none" stroke="#3daee9" stroke-width="1.3"/></svg><span class="t " style="left:592px;top:629.50px;height:24px;line-height:24px;font-size:17.5px;color:#fcfcfc;letter-spacing:0.477px;">origin/work/akselmo/expand-folder-on-hover-folderpanel-wayland</span><span class="t " style="left:1131px;top:629.50px;height:24px;line-height:24px;font-size:17.5px;color:#a1a3a4;font-style:italic;letter-spacing:-0.094px;">remote</span><svg class="b" style="left:562px;top:626.5px;" width="30" height="30" viewBox="0 0 30 30"><g fill="none" stroke="#e4e4e4" stroke-width="1.2"><circle cx="10.50" cy="8.50" r="2.07"/><circle cx="10.50" cy="19.65" r="2.07"/><path d="M10.50 10.57V17.59M10.50 13.78H18.21Q20.60 13.78 20.60 11.44V10.87"/></g><circle cx="20.60" cy="8.78" r="2.07" fill="none" stroke="#3daee9" stroke-width="1.3"/></svg><span class="t " style="left:592px;top:659.50px;height:24px;line-height:24px;font-size:17.5px;color:#fcfcfc;letter-spacing:-1.129px;">origin/work/akselmo/selection-fixes</span><span class="t " style="left:830px;top:659.50px;height:24px;line-height:24px;font-size:17.5px;color:#a1a3a4;font-style:italic;letter-spacing:-0.094px;">remote</span><svg class="b" style="left:562px;top:656.5px;" width="30" height="30" viewBox="0 0 30 30"><g fill="none" stroke="#e4e4e4" stroke-width="1.2"><circle cx="10.50" cy="8.50" r="2.07"/><circle cx="10.50" cy="19.65" r="2.07"/><path d="M10.50 10.57V17.59M10.50 13.78H18.21Q20.60 13.78 20.60 11.44V10.87"/></g><circle cx="20.60" cy="8.78" r="2.07" fill="none" stroke="#3daee9" stroke-width="1.3"/></svg><div class="b" style="left:562px;top:666px;width:794px;height:4px;background:#282c30;"></div><div class="b" style="left:1331.4px;top:666px;width:1px;height:4px;background:#282c30;"></div></div></div></div></div></div></body></html>
